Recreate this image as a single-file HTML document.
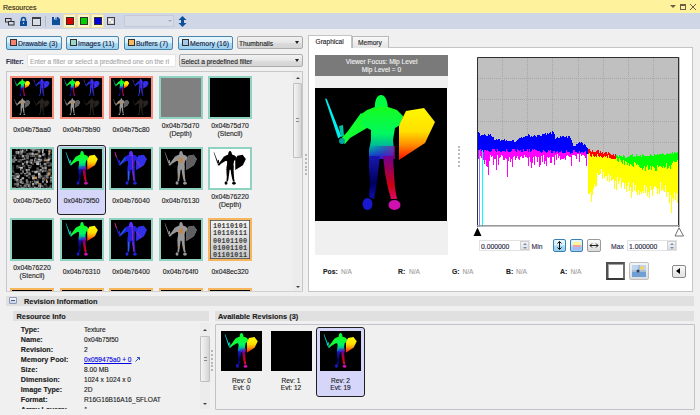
<!DOCTYPE html><html><head><meta charset="utf-8"><style>
*{margin:0;padding:0;box-sizing:border-box}
html,body{width:700px;height:415px;overflow:hidden;background:#f0f0f0;font-family:"Liberation Sans",sans-serif;font-size:7px;color:#1e1e1e}
.ab{position:absolute}
.t{position:absolute;white-space:pre;line-height:1;-webkit-text-stroke:0.12px currentColor}
.b{font-weight:bold}
.btn{position:absolute;border:1px solid #4a84ad;border-radius:2px;background:linear-gradient(#e8f6fd 0%,#d7effc 45%,#a9dbf6 55%,#9acfee 100%)}
.combo{position:absolute;border:1px solid #acacac;border-radius:2px;background:linear-gradient(#f2f2f2,#e6e6e6 50%,#dcdcdc 51%,#d4d4d4)}
.tri{position:absolute;width:0;height:0;border-left:2.5px solid transparent;border-right:2.5px solid transparent;border-top:3px solid #1e1e1e}
.frame{position:absolute;width:44px;height:43px;border:2px solid #8fd2c2;background:#000;overflow:hidden}
.fr-s{border-color:#f58c7c}
.fr-o{border-color:#f7b55c}
.lbl{-webkit-text-stroke:0.12px currentColor;position:absolute;width:50px;text-align:center;line-height:8px;color:#202020;font-size:6.8px}
</style></head><body>
<svg width="0" height="0" style="position:absolute">
<defs>
<linearGradient id="gBody" gradientUnits="userSpaceOnUse" x1="0" y1="7" x2="0" y2="71"><stop offset="0" stop-color="#20ff00"/><stop offset="0.6" stop-color="#00f860"/><stop offset="0.82" stop-color="#00b0a0"/><stop offset="1" stop-color="#2020d0"/></linearGradient>
<linearGradient id="gLegL" gradientUnits="userSpaceOnUse" x1="0" y1="68" x2="0" y2="122"><stop offset="0" stop-color="#1818b0"/><stop offset="0.5" stop-color="#000060"/><stop offset="1" stop-color="#1818e0"/></linearGradient>
<linearGradient id="gLegR" gradientUnits="userSpaceOnUse" x1="0" y1="68" x2="0" y2="122"><stop offset="0" stop-color="#700090"/><stop offset="0.55" stop-color="#d00010"/><stop offset="1" stop-color="#e010b0"/></linearGradient>
<linearGradient id="gShield" gradientUnits="userSpaceOnUse" x1="0" y1="20" x2="0" y2="72"><stop offset="0" stop-color="#fff800"/><stop offset="0.45" stop-color="#ffe000"/><stop offset="0.7" stop-color="#ff9000"/><stop offset="1" stop-color="#ff0800"/></linearGradient>
<linearGradient id="gHip" x1="0" y1="0" x2="1" y2="0"><stop offset="0" stop-color="#0000ff" stop-opacity="0"/><stop offset="1" stop-color="#a000a0" stop-opacity="0.7"/></linearGradient>
<linearGradient id="gBin" x1="0" y1="0" x2="0" y2="1"><stop offset="0" stop-color="#f4f4f4"/><stop offset="1" stop-color="#c4c4c4"/></linearGradient>
<g id="kSil"><path d="M60,24 C59,12 62,7 66,7 C70,7 73,12 73,24 Z"/><path d="M45,27 L52,22 L60,19 L73,19 L82,22 L88,28 L87,36 L80,40 L78,52 L79,62 L78,71 L54,71 L54,62 L56,52 L56,42 L48,38 Z"/><path d="M46,25 L55,33 L52,40 L35,50 L30,56 L25,52 L33,43 Z"/><path d="M10,10.5 L11.8,11 L26.3,48 L23.2,50.5 Z"/><path d="M24,38 L28,37 L29,48 L26,49 Z"/><path d="M54,68 L65,68 L63,85 L61,100 L59,111 L54,109 L55,95 L54,80 Z"/><path d="M68,68 L78,68 L79,85 L80,100 L82,111 L76,111 L73,100 L70,85 Z"/><ellipse cx="52.5" cy="116" rx="5" ry="6"/><ellipse cx="79.5" cy="117" rx="6" ry="5"/><circle cx="27" cy="53" r="3"/><path d="M88,29 L91,23 L109,20 L120,34 L110,55 L84,72 L84,38 Z"/></g>
<symbol id="kRain" viewBox="0 0 132 133">
 <path fill="#00f0f0" d="M10,10.5 L11.8,11 L26.3,48 L23.2,50.5 Z"/>
 <path fill="#00c0a0" d="M24,38 L28,37 L29,48 L26,49 Z"/>
 <path fill="#00ff40" d="M60,24 C59,12 62,7 66,7 C70,7 73,12 73,24 Z"/>
 <path fill="#10ff30" d="M46,25 L55,33 L52,40 L35,50 L30,56 L25,52 L33,43 Z"/>
 <circle fill="#00a0a0" cx="27" cy="53" r="3"/>
 <path fill="url(#gBody)" d="M45,27 L52,22 L60,19 L73,19 L82,22 L88,28 L87,36 L80,40 L78,52 L79,62 L78,71 L54,71 L54,62 L56,52 L56,42 L48,38 Z"/>
 <rect x="53" y="58" width="27" height="13" fill="url(#gHip)"/>
 <path fill="url(#gLegL)" d="M54,68 L65,68 L63,85 L61,100 L59,111 L54,109 L55,95 L54,80 Z"/>
 <path fill="url(#gLegR)" d="M68,68 L78,68 L79,85 L80,100 L82,111 L76,111 L73,100 L70,85 Z"/>
 <ellipse fill="#1818d0" cx="52.5" cy="116" rx="5" ry="6"/>
 <ellipse fill="#d010b0" cx="79.5" cy="117" rx="6" ry="5"/>
 <path fill="url(#gShield)" d="M88,29 L91,23 L109,20 L120,34 L110,55 L84,72 L84,38 Z"/>
</symbol>
<symbol id="kBlue" viewBox="0 0 132 133"><use href="#kSil" fill="#2424e0"/><path fill="#3030e8" d="M88,29 L91,23 L109,20 L120,34 L110,55 L84,72 L84,38 Z"/><path fill="#6030ff" d="M60,24 C59,12 62,7 66,7 C70,7 73,12 73,24 Z"/><path fill="#e02080" d="M10,11 L12.5,10 L18,28 L15,29 Z"/><path d="M70,22 L72,70 M73,75 L76,108 M84,40 L100,60" stroke="#d020a0" stroke-width="2.5" fill="none"/><path d="M46,30 L30,52 M57,75 L57,105" stroke="#20c0a0" stroke-width="2" fill="none"/></symbol>
<symbol id="kGray" viewBox="0 0 132 133"><use href="#kSil" fill="#989898"/><path fill="#606060" d="M88,29 L91,23 L109,20 L120,34 L110,55 L84,72 L84,38 Z"/><rect x="61" y="30" width="10" height="16" fill="#d08030"/><rect x="56" y="90" width="4" height="4" fill="#d08030"/><rect x="73" y="90" width="4" height="4" fill="#d08030"/></symbol>
<symbol id="kDark" viewBox="0 0 132 133"><use href="#kSil" fill="#2a2420"/></symbol>
<symbol id="kBlack" viewBox="0 0 132 133"><use href="#kSil" fill="#000"/></symbol>
<symbol id="kQuad" viewBox="0 0 132 133">
 <use href="#kRain" x="0" y="0" width="66" height="66"/>
 <use href="#kBlue" x="66" y="0" width="66" height="66"/>
 <use href="#kGray" x="0" y="66" width="66" height="66"/>
 <use href="#kDark" x="66" y="66" width="66" height="66"/>
</symbol>
</defs></svg>
<div class="ab" style="left:0;top:0;width:700px;height:13px;background:#fff29d"></div>
<div class="t" style="left:3px;top:3.6px;font-size:7px;color:#2a2010">Resources</div>
<div class="ab" style="left:670px;top:5px;width:0;height:0;border-left:3px solid transparent;border-right:3px solid transparent;border-top:3px solid #6e5e44"></div>
<div class="ab" style="left:680px;top:4px;width:6px;height:6px;border:1px solid #6e5e44;border-top-width:2px"></div>
<svg class="ab" style="left:689px;top:3px" width="8" height="8"><path d="M1,1 L7,7 M7,1 L1,7" stroke="#6e5e44" stroke-width="1"/></svg>
<div class="ab" style="left:0;top:13px;width:700px;height:16px;background:#cfd6e5"></div>
<svg class="ab" style="left:4px;top:17px" width="12" height="10"><rect x="1.5" y="1.5" width="5.5" height="3.5" fill="none" stroke="#303030" stroke-width="1"/><rect x="4.5" y="4.5" width="5.5" height="3.5" fill="#cfd6e5" stroke="#303030" stroke-width="1"/></svg>
<svg class="ab" style="left:19px;top:16px" width="9" height="11"><path d="M2.5,5 V3.5 A2,2 0 0 1 6.5,3.5 V5" fill="none" stroke="#0e4f9a" stroke-width="1.6"/><rect x="1" y="5" width="7" height="5" fill="#0e4f9a"/><rect x="4" y="6.5" width="1" height="1.5" fill="#cfd6e5"/></svg>
<div class="ab" style="left:32px;top:17px;width:9px;height:9px;border:1px solid #404040;border-top-width:2px;background:#d8dde8"></div>
<div class="ab" style="left:45px;top:16px;width:1px;height:11px;background:#b4bccb"></div>
<svg class="ab" style="left:52px;top:17px" width="8" height="8"><path d="M0,0 H6 L8,2 V8 H0 Z" fill="#0e4f9a"/><rect x="2" y="0" width="3" height="2.5" fill="#cfd6e5"/><rect x="3.5" y="0.5" width="1" height="1.5" fill="#0e4f9a"/></svg>
<div class="ab" style="left:63px;top:14px;width:13px;height:14px;background:#fdf4c6;border:1px solid #efe0a0"></div>
<div class="ab" style="left:66px;top:17px;width:8px;height:8px;background:#e00000;border:1px solid #303030"></div>
<div class="ab" style="left:77px;top:14px;width:13px;height:14px;background:#fdf4c6;border:1px solid #efe0a0"></div>
<div class="ab" style="left:80px;top:17px;width:8px;height:8px;background:#00d000;border:1px solid #303030"></div>
<div class="ab" style="left:91px;top:14px;width:13px;height:14px;background:#fdf4c6;border:1px solid #efe0a0"></div>
<div class="ab" style="left:94px;top:17px;width:8px;height:8px;background:#0000e0;border:1px solid #303030"></div>
<svg class="ab" style="left:107px;top:17px" width="8" height="8"><rect x="0.5" y="0.5" width="7" height="7" fill="#d0d0d0" stroke="#404040"/><path d="M2,2h2v2h-2zM4,4h2v2h-2z" fill="#fff"/></svg>
<div class="ab" style="left:124px;top:15px;width:50px;height:12px;border:1px solid #c4cad6;background:#d5dbe7"></div>
<div class="ab" style="left:168px;top:20px;width:0;height:0;border-left:2px solid transparent;border-right:2px solid transparent;border-top:2px solid #a0a8b8"></div>
<svg class="ab" style="left:178px;top:16px" width="9" height="11"><path d="M4.5,0 L8.5,4 H6 V7 H8.5 L4.5,11 L0.5,7 H3 V4 H0.5 Z" fill="#0e4f9a"/></svg>
<div class="btn" style="left:6px;top:36px;width:56px;height:14px"></div>
<div class="ab" style="left:10px;top:39px;width:7px;height:7px;background:#f7806e;border:1px solid #303030"></div>
<div class="t" style="left:18px;top:41px;color:#1a1a40;font-size:6.9px">Drawable (3)</div>
<div class="btn" style="left:66px;top:36px;width:53px;height:14px"></div>
<div class="ab" style="left:70px;top:39px;width:7px;height:7px;background:#9ad6c6;border:1px solid #303030"></div>
<div class="t" style="left:78px;top:41px;color:#1a1a40;font-size:6.9px">Images (11)</div>
<div class="btn" style="left:124px;top:36px;width:49px;height:14px"></div>
<div class="ab" style="left:128px;top:39px;width:7px;height:7px;background:#f8b860;border:1px solid #303030"></div>
<div class="t" style="left:136px;top:41px;color:#1a1a40;font-size:6.9px">Buffers (7)</div>
<div class="btn" style="left:178px;top:36px;width:55px;height:14px"></div>
<div class="ab" style="left:182px;top:39px;width:7px;height:7px;background:#a8c8e8;border:1px solid #303030"></div>
<div class="t" style="left:190px;top:41px;color:#1a1a40;font-size:6.9px">Memory (16)</div>
<div class="combo" style="left:237px;top:36px;width:66px;height:13px"></div>
<div class="t" style="left:239px;top:40.5px;font-size:6.6px">Thumbnails</div>
<div class="tri" style="left:294.5px;top:41px"></div>
<div class="t b" style="left:6px;top:59px;font-size:6.4px;color:#303050">Filter:</div>
<div class="ab" style="left:27px;top:54px;width:149px;height:13px;background:#fff;border:1px solid #e4e4e4"></div>
<div class="t" style="left:30px;top:59px;font-size:6.6px;color:#a8a8a8;width:145px;overflow:hidden">Enter a filter or select a predefined one on the ri</div>
<div class="combo" style="left:179px;top:54px;width:124px;height:13px"></div>
<div class="t" style="left:181px;top:58.5px;font-size:6.6px">Select a predefined filter</div>
<div class="tri" style="left:294.5px;top:59px"></div>
<div class="ab" style="left:6px;top:71px;width:297px;height:221px;border:1px solid #c8c8c8;border-bottom:none;background:#f0f0f0"></div>
<div class="ab" style="left:293px;top:72px;width:9px;height:219px;background:#ececec"></div>
<div class="ab" style="left:296px;top:77px;width:0;height:0;border-left:2.5px solid transparent;border-right:2.5px solid transparent;border-bottom:2.5px solid #404040"></div>
<div class="ab" style="left:293px;top:83px;width:9px;height:75px;border:1px solid #c0c0c0;border-radius:1px;background:linear-gradient(90deg,#f4f4f4,#e6e6e6 50%,#d4d4d4)"></div>
<div class="ab" style="left:296px;top:118px;width:3px;height:4px;border-top:1px solid #888;border-bottom:1px solid #888"></div>
<div class="ab" style="left:296px;top:286px;width:0;height:0;border-left:2.5px solid transparent;border-right:2.5px solid transparent;border-top:2.5px solid #404040"></div>
<div class="ab" style="left:0;top:0;width:293px;height:291px;overflow:hidden">
<div class="frame fr-s" style="left:10px;top:76px"><svg width="40" height="39" style="display:block;background:#000"><use href="#kQuad" width="40" height="39"/></svg></div>
<div class="lbl" style="left:7px;top:126px">0x04b75aa0</div>
<div class="frame fr-s" style="left:59.5px;top:76px"><svg width="40" height="39" style="display:block;background:#000"><use href="#kQuad" width="40" height="39"/></svg></div>
<div class="lbl" style="left:56.5px;top:126px">0x04b75b90</div>
<div class="frame fr-s" style="left:109px;top:76px"><svg width="40" height="39" style="display:block;background:#000"><use href="#kQuad" width="40" height="39"/></svg></div>
<div class="lbl" style="left:106px;top:126px">0x04b75c80</div>
<div class="frame" style="left:158.5px;top:76px"><div style="width:40px;height:39px;background:#808080"></div></div>
<div class="lbl" style="left:155.5px;top:122px">0x04b75d70<br>(Depth)</div>
<div class="frame" style="left:208px;top:76px"></div>
<div class="lbl" style="left:205px;top:122px">0x04b75d70<br>(Stencil)</div>
<div class="frame" style="left:10px;top:147px"><svg width="40" height="39" style="display:block;background:#000;filter:blur(0.45px)"><rect x="3.9" y="-0.4" width="2" height="1.5" fill="rgb(55,55,55)"/><rect x="7.6" y="0.1" width="2" height="2.5" fill="rgb(81,81,81)"/><rect x="9.9" y="0.5" width="1.5" height="2.5" fill="rgb(187,187,187)"/><rect x="11.6" y="-0.2" width="2" height="1.5" fill="rgb(88,88,88)"/><rect x="14.0" y="-0.4" width="1.5" height="2.5" fill="rgb(140,140,140)"/><rect x="18.1" y="-0.0" width="2.5" height="1.5" fill="rgb(109,109,109)"/><rect x="20.1" y="0.0" width="2.5" height="2.5" fill="rgb(149,149,149)"/><rect x="22.0" y="-0.3" width="2.5" height="1.5" fill="rgb(136,136,136)"/><rect x="23.6" y="0.1" width="2.5" height="2" fill="rgb(108,108,108)"/><rect x="26.0" y="0.3" width="2.5" height="2" fill="rgb(134,134,134)"/><rect x="27.8" y="0.1" width="3" height="2" fill="rgb(54,54,54)"/><rect x="30.4" y="-0.1" width="1.5" height="2" fill="rgb(178,178,178)"/><rect x="33.9" y="0.4" width="1.5" height="1.5" fill="rgb(64,64,64)"/><rect x="36.3" y="0.4" width="2.5" height="2.5" fill="rgb(127,127,127)"/><rect x="38.5" y="-0.3" width="2" height="1.5" fill="rgb(98,98,98)"/><rect x="3.5" y="1.9" width="2.5" height="2.5" fill="rgb(133,133,133)"/><rect x="6.0" y="2.1" width="1.5" height="2" fill="rgb(187,187,187)"/><rect x="8.3" y="1.9" width="3" height="2" fill="rgb(161,161,161)"/><rect x="11.7" y="1.7" width="2.5" height="2.5" fill="rgb(54,54,54)"/><rect x="25.8" y="1.8" width="2.5" height="2" fill="rgb(137,137,137)"/><rect x="30.0" y="1.6" width="1.5" height="2.5" fill="rgb(193,193,193)"/><rect x="36.5" y="2.0" width="2" height="2.5" fill="rgb(200,140,80)"/><rect x="38.5" y="2.4" width="2.5" height="2.5" fill="rgb(49,49,49)"/><rect x="3.8" y="3.7" width="2" height="1.5" fill="rgb(124,124,124)"/><rect x="6.0" y="3.9" width="1.5" height="1.5" fill="rgb(155,155,155)"/><rect x="8.1" y="3.8" width="2.5" height="2" fill="rgb(115,115,115)"/><rect x="14.5" y="4.1" width="1.5" height="2" fill="rgb(95,95,95)"/><rect x="16.3" y="3.6" width="3" height="2.5" fill="rgb(96,96,96)"/><rect x="18.3" y="3.8" width="3" height="2" fill="rgb(116,116,116)"/><rect x="19.7" y="3.6" width="2" height="2.5" fill="rgb(187,187,187)"/><rect x="22.3" y="4.5" width="2.5" height="1.5" fill="rgb(165,165,165)"/><rect x="24.5" y="4.1" width="2" height="2" fill="rgb(200,140,80)"/><rect x="25.5" y="3.7" width="2" height="2.5" fill="rgb(74,74,74)"/><rect x="30.2" y="4.4" width="3" height="2.5" fill="rgb(170,170,170)"/><rect x="36.1" y="4.3" width="2" height="1.5" fill="rgb(175,175,175)"/><rect x="0.2" y="6.0" width="3" height="1.5" fill="rgb(63,63,63)"/><rect x="1.5" y="5.6" width="3" height="2.5" fill="rgb(53,53,53)"/><rect x="6.5" y="6.1" width="2" height="2.5" fill="rgb(54,54,54)"/><rect x="9.7" y="6.0" width="2.5" height="2.5" fill="rgb(166,166,166)"/><rect x="11.9" y="5.9" width="2.5" height="1.5" fill="rgb(75,75,75)"/><rect x="13.8" y="5.6" width="2" height="2.5" fill="rgb(109,109,109)"/><rect x="15.6" y="6.0" width="1.5" height="2" fill="rgb(99,99,99)"/><rect x="17.7" y="6.2" width="3" height="2" fill="rgb(69,69,69)"/><rect x="19.9" y="5.8" width="3" height="2" fill="rgb(98,98,98)"/><rect x="21.8" y="6.5" width="1.5" height="1.5" fill="rgb(102,102,102)"/><rect x="23.5" y="6.3" width="2.5" height="1.5" fill="rgb(60,60,60)"/><rect x="26.4" y="5.9" width="3" height="2.5" fill="rgb(172,172,172)"/><rect x="31.8" y="5.5" width="1.5" height="2" fill="rgb(72,72,72)"/><rect x="36.0" y="5.8" width="3" height="2" fill="rgb(54,54,54)"/><rect x="38.4" y="6.5" width="2.5" height="1.5" fill="rgb(51,51,51)"/><rect x="1.7" y="7.9" width="2" height="2" fill="rgb(139,139,139)"/><rect x="12.0" y="8.4" width="1.5" height="2.5" fill="rgb(127,127,127)"/><rect x="14.3" y="7.9" width="2.5" height="2.5" fill="rgb(109,109,109)"/><rect x="22.5" y="8.5" width="2" height="1.5" fill="rgb(154,154,154)"/><rect x="25.6" y="8.3" width="2.5" height="2.5" fill="rgb(83,83,83)"/><rect x="31.8" y="8.5" width="2.5" height="1.5" fill="rgb(68,68,68)"/><rect x="35.8" y="7.6" width="2.5" height="2.5" fill="rgb(77,77,77)"/><rect x="37.6" y="8.3" width="2" height="2" fill="rgb(82,82,82)"/><rect x="0.1" y="9.6" width="2" height="2.5" fill="rgb(104,104,104)"/><rect x="2.3" y="10.2" width="3" height="1.5" fill="rgb(162,162,162)"/><rect x="6.2" y="10.0" width="3" height="2.5" fill="rgb(66,66,66)"/><rect x="8.3" y="10.1" width="1.5" height="2.5" fill="rgb(120,120,120)"/><rect x="10.2" y="9.7" width="1.5" height="1.5" fill="rgb(178,178,178)"/><rect x="18.1" y="10.2" width="3" height="2" fill="rgb(128,128,128)"/><rect x="22.0" y="10.2" width="1.5" height="2.5" fill="rgb(157,157,157)"/><rect x="23.8" y="10.2" width="2" height="1.5" fill="rgb(82,82,82)"/><rect x="25.9" y="10.0" width="2.5" height="1.5" fill="rgb(191,191,191)"/><rect x="27.6" y="9.8" width="2.5" height="2.5" fill="rgb(141,141,141)"/><rect x="29.8" y="10.2" width="2" height="2.5" fill="rgb(46,46,46)"/><rect x="32.0" y="10.3" width="2" height="2" fill="rgb(151,151,151)"/><rect x="34.0" y="10.3" width="3" height="2" fill="rgb(200,140,80)"/><rect x="35.6" y="9.6" width="2.5" height="2" fill="rgb(182,182,182)"/><rect x="0.2" y="11.7" width="3" height="2" fill="rgb(121,121,121)"/><rect x="5.6" y="11.8" width="2.5" height="1.5" fill="rgb(112,112,112)"/><rect x="8.3" y="11.6" width="2" height="2.5" fill="rgb(45,45,45)"/><rect x="11.9" y="12.4" width="1.5" height="2" fill="rgb(82,82,82)"/><rect x="13.8" y="11.6" width="2.5" height="2.5" fill="rgb(158,158,158)"/><rect x="16.0" y="11.7" width="2.5" height="2" fill="rgb(82,82,82)"/><rect x="18.4" y="12.4" width="2" height="2.5" fill="rgb(166,166,166)"/><rect x="21.6" y="12.4" width="3" height="1.5" fill="rgb(106,106,106)"/><rect x="23.9" y="11.8" width="2.5" height="2.5" fill="rgb(127,127,127)"/><rect x="25.7" y="12.0" width="3" height="1.5" fill="rgb(142,142,142)"/><rect x="34.4" y="12.5" width="3" height="2" fill="rgb(119,119,119)"/><rect x="9.9" y="13.9" width="2" height="2" fill="rgb(178,178,178)"/><rect x="13.9" y="14.2" width="2" height="1.5" fill="rgb(119,119,119)"/><rect x="20.3" y="14.4" width="1.5" height="1.5" fill="rgb(111,111,111)"/><rect x="24.1" y="13.5" width="3" height="2.5" fill="rgb(179,179,179)"/><rect x="25.6" y="13.7" width="1.5" height="2.5" fill="rgb(190,190,190)"/><rect x="27.6" y="14.3" width="1.5" height="1.5" fill="rgb(171,171,171)"/><rect x="31.6" y="13.8" width="3" height="2.5" fill="rgb(141,141,141)"/><rect x="34.4" y="13.7" width="2.5" height="1.5" fill="rgb(59,59,59)"/><rect x="36.5" y="13.8" width="2.5" height="2.5" fill="rgb(45,45,45)"/><rect x="38.0" y="13.5" width="3" height="2.5" fill="rgb(81,81,81)"/><rect x="0.4" y="16.1" width="1.5" height="2" fill="rgb(53,53,53)"/><rect x="4.2" y="16.2" width="2.5" height="2.5" fill="rgb(100,100,100)"/><rect x="6.3" y="15.6" width="3" height="1.5" fill="rgb(46,46,46)"/><rect x="10.3" y="15.8" width="3" height="2.5" fill="rgb(79,79,79)"/><rect x="15.6" y="15.9" width="2" height="1.5" fill="rgb(144,144,144)"/><rect x="17.6" y="15.9" width="2.5" height="2.5" fill="rgb(66,66,66)"/><rect x="27.8" y="16.2" width="2.5" height="2" fill="rgb(123,123,123)"/><rect x="29.6" y="15.9" width="1.5" height="2.5" fill="rgb(61,61,61)"/><rect x="32.3" y="16.3" width="3" height="1.5" fill="rgb(76,76,76)"/><rect x="35.7" y="15.9" width="3" height="1.5" fill="rgb(100,100,100)"/><rect x="37.9" y="15.9" width="3" height="1.5" fill="rgb(82,82,82)"/><rect x="-0.4" y="18.1" width="2.5" height="2" fill="rgb(54,54,54)"/><rect x="4.2" y="18.4" width="2.5" height="1.5" fill="rgb(51,51,51)"/><rect x="6.4" y="17.6" width="2" height="1.5" fill="rgb(134,134,134)"/><rect x="7.9" y="17.8" width="3" height="2" fill="rgb(188,188,188)"/><rect x="11.8" y="18.2" width="2" height="2.5" fill="rgb(46,46,46)"/><rect x="16.1" y="18.0" width="3" height="1.5" fill="rgb(114,114,114)"/><rect x="24.4" y="18.5" width="2.5" height="2.5" fill="rgb(93,93,93)"/><rect x="29.7" y="17.9" width="2" height="2.5" fill="rgb(151,151,151)"/><rect x="32.3" y="17.8" width="2.5" height="2.5" fill="rgb(161,161,161)"/><rect x="-0.2" y="20.4" width="2" height="2" fill="rgb(72,72,72)"/><rect x="8.0" y="19.5" width="1.5" height="2" fill="rgb(142,142,142)"/><rect x="9.9" y="20.4" width="2" height="1.5" fill="rgb(79,79,79)"/><rect x="13.6" y="20.0" width="2" height="2" fill="rgb(169,169,169)"/><rect x="15.5" y="20.1" width="2.5" height="1.5" fill="rgb(161,161,161)"/><rect x="24.4" y="20.3" width="2.5" height="2" fill="rgb(50,50,50)"/><rect x="25.7" y="20.3" width="3" height="1.5" fill="rgb(72,72,72)"/><rect x="27.7" y="20.0" width="2" height="2" fill="rgb(164,164,164)"/><rect x="29.8" y="20.5" width="2.5" height="2.5" fill="rgb(106,106,106)"/><rect x="32.4" y="20.5" width="2.5" height="2.5" fill="rgb(98,98,98)"/><rect x="36.4" y="19.9" width="1.5" height="2" fill="rgb(200,140,80)"/><rect x="37.6" y="19.6" width="2" height="2.5" fill="rgb(99,99,99)"/><rect x="0.4" y="22.2" width="2" height="1.5" fill="rgb(104,104,104)"/><rect x="10.3" y="21.8" width="1.5" height="2" fill="rgb(158,158,158)"/><rect x="14.2" y="22.2" width="2" height="2.5" fill="rgb(140,140,140)"/><rect x="16.3" y="22.3" width="2" height="2.5" fill="rgb(78,78,78)"/><rect x="19.6" y="21.7" width="2" height="1.5" fill="rgb(122,122,122)"/><rect x="22.2" y="21.8" width="3" height="2.5" fill="rgb(171,171,171)"/><rect x="24.1" y="21.8" width="2" height="2" fill="rgb(172,172,172)"/><rect x="25.7" y="21.5" width="3" height="2" fill="rgb(100,100,100)"/><rect x="29.7" y="22.0" width="1.5" height="1.5" fill="rgb(161,161,161)"/><rect x="34.0" y="21.5" width="2" height="1.5" fill="rgb(58,58,58)"/><rect x="35.6" y="22.3" width="3" height="2.5" fill="rgb(92,92,92)"/><rect x="38.5" y="22.2" width="1.5" height="1.5" fill="rgb(65,65,65)"/><rect x="2.3" y="24.2" width="2" height="1.5" fill="rgb(88,88,88)"/><rect x="3.8" y="24.1" width="3" height="1.5" fill="rgb(136,136,136)"/><rect x="8.1" y="23.7" width="2.5" height="1.5" fill="rgb(117,117,117)"/><rect x="11.8" y="23.9" width="2.5" height="1.5" fill="rgb(140,140,140)"/><rect x="14.5" y="24.0" width="1.5" height="2" fill="rgb(52,52,52)"/><rect x="16.3" y="23.8" width="2.5" height="2.5" fill="rgb(139,139,139)"/><rect x="26.0" y="23.8" width="2.5" height="2.5" fill="rgb(188,188,188)"/><rect x="34.4" y="23.6" width="2" height="2.5" fill="rgb(109,109,109)"/><rect x="35.9" y="23.6" width="2.5" height="2.5" fill="rgb(200,140,80)"/><rect x="0.1" y="26.0" width="2" height="1.5" fill="rgb(133,133,133)"/><rect x="1.6" y="26.1" width="2.5" height="2" fill="rgb(81,81,81)"/><rect x="4.3" y="26.4" width="3" height="2.5" fill="rgb(190,190,190)"/><rect x="6.4" y="25.5" width="1.5" height="2" fill="rgb(155,155,155)"/><rect x="12.2" y="25.7" width="3" height="1.5" fill="rgb(60,60,60)"/><rect x="13.9" y="26.1" width="2.5" height="1.5" fill="rgb(141,141,141)"/><rect x="19.5" y="26.3" width="3" height="1.5" fill="rgb(162,162,162)"/><rect x="21.6" y="25.7" width="1.5" height="1.5" fill="rgb(112,112,112)"/><rect x="26.2" y="25.8" width="3" height="2.5" fill="rgb(149,149,149)"/><rect x="28.1" y="26.5" width="2" height="1.5" fill="rgb(123,123,123)"/><rect x="29.7" y="26.2" width="2" height="2.5" fill="rgb(47,47,47)"/><rect x="32.1" y="25.9" width="3" height="2" fill="rgb(73,73,73)"/><rect x="33.9" y="26.2" width="2.5" height="1.5" fill="rgb(149,149,149)"/><rect x="35.7" y="25.5" width="1.5" height="1.5" fill="rgb(132,132,132)"/><rect x="38.2" y="25.5" width="2" height="2.5" fill="rgb(69,69,69)"/><rect x="-0.5" y="28.4" width="2.5" height="1.5" fill="rgb(51,51,51)"/><rect x="1.6" y="28.4" width="3" height="1.5" fill="rgb(167,167,167)"/><rect x="9.6" y="28.3" width="2.5" height="2" fill="rgb(181,181,181)"/><rect x="15.9" y="27.5" width="2.5" height="2" fill="rgb(75,75,75)"/><rect x="20.1" y="28.0" width="2.5" height="2.5" fill="rgb(181,181,181)"/><rect x="22.0" y="27.6" width="3" height="2.5" fill="rgb(200,140,80)"/><rect x="26.1" y="27.8" width="3" height="1.5" fill="rgb(152,152,152)"/><rect x="27.6" y="27.8" width="1.5" height="2" fill="rgb(88,88,88)"/><rect x="30.1" y="28.5" width="2.5" height="2.5" fill="rgb(168,168,168)"/><rect x="32.2" y="28.0" width="1.5" height="2.5" fill="rgb(87,87,87)"/><rect x="34.1" y="27.6" width="2.5" height="2" fill="rgb(118,118,118)"/><rect x="37.9" y="28.1" width="2.5" height="1.5" fill="rgb(178,178,178)"/><rect x="2.5" y="30.1" width="3" height="1.5" fill="rgb(126,126,126)"/><rect x="4.1" y="29.8" width="2.5" height="2.5" fill="rgb(158,158,158)"/><rect x="7.7" y="29.9" width="2.5" height="2.5" fill="rgb(144,144,144)"/><rect x="13.8" y="30.3" width="2" height="2.5" fill="rgb(149,149,149)"/><rect x="21.7" y="30.5" width="1.5" height="1.5" fill="rgb(69,69,69)"/><rect x="24.5" y="30.3" width="2.5" height="2" fill="rgb(60,60,60)"/><rect x="30.0" y="29.5" width="3" height="2.5" fill="rgb(87,87,87)"/><rect x="33.8" y="30.2" width="1.5" height="2.5" fill="rgb(200,140,80)"/><rect x="38.1" y="30.3" width="2" height="2.5" fill="rgb(150,150,150)"/><rect x="4.4" y="31.7" width="3" height="2.5" fill="rgb(83,83,83)"/><rect x="6.0" y="31.5" width="3" height="2.5" fill="rgb(68,68,68)"/><rect x="8.2" y="32.3" width="3" height="2" fill="rgb(184,184,184)"/><rect x="9.7" y="32.2" width="2" height="2.5" fill="rgb(60,60,60)"/><rect x="14.0" y="31.5" width="2.5" height="2.5" fill="rgb(113,113,113)"/><rect x="17.7" y="32.0" width="1.5" height="2.5" fill="rgb(113,113,113)"/><rect x="19.8" y="31.9" width="1.5" height="1.5" fill="rgb(98,98,98)"/><rect x="21.9" y="31.8" width="2" height="2" fill="rgb(108,108,108)"/><rect x="23.7" y="32.3" width="3" height="2" fill="rgb(185,185,185)"/><rect x="30.0" y="32.1" width="2" height="1.5" fill="rgb(166,166,166)"/><rect x="34.0" y="31.8" width="2" height="2" fill="rgb(167,167,167)"/><rect x="37.8" y="31.9" width="2" height="2" fill="rgb(85,85,85)"/><rect x="1.8" y="34.0" width="3" height="2.5" fill="rgb(87,87,87)"/><rect x="4.4" y="34.4" width="1.5" height="1.5" fill="rgb(143,143,143)"/><rect x="5.6" y="34.3" width="1.5" height="2.5" fill="rgb(180,180,180)"/><rect x="9.6" y="33.6" width="2" height="1.5" fill="rgb(143,143,143)"/><rect x="12.4" y="34.3" width="2" height="2.5" fill="rgb(96,96,96)"/><rect x="14.2" y="34.4" width="2.5" height="1.5" fill="rgb(136,136,136)"/><rect x="16.3" y="34.2" width="1.5" height="2.5" fill="rgb(76,76,76)"/><rect x="20.1" y="34.0" width="2" height="2.5" fill="rgb(169,169,169)"/><rect x="22.4" y="33.5" width="2.5" height="2" fill="rgb(119,119,119)"/><rect x="24.0" y="33.9" width="1.5" height="1.5" fill="rgb(119,119,119)"/><rect x="26.1" y="34.2" width="2.5" height="1.5" fill="rgb(200,140,80)"/><rect x="27.5" y="34.2" width="2" height="2" fill="rgb(117,117,117)"/><rect x="32.1" y="34.4" width="2.5" height="2" fill="rgb(96,96,96)"/><rect x="4.4" y="35.8" width="2" height="2.5" fill="rgb(95,95,95)"/><rect x="6.2" y="35.6" width="1.5" height="1.5" fill="rgb(62,62,62)"/><rect x="8.1" y="35.9" width="1.5" height="1.5" fill="rgb(128,128,128)"/><rect x="11.6" y="36.0" width="3" height="2.5" fill="rgb(116,116,116)"/><rect x="15.6" y="35.5" width="3" height="2.5" fill="rgb(148,148,148)"/><rect x="17.5" y="36.3" width="1.5" height="2" fill="rgb(60,60,60)"/><rect x="20.2" y="36.4" width="2" height="2" fill="rgb(65,65,65)"/><rect x="26.0" y="36.0" width="1.5" height="2" fill="rgb(131,131,131)"/><rect x="27.5" y="35.9" width="2" height="2" fill="rgb(182,182,182)"/><rect x="30.0" y="36.4" width="1.5" height="2" fill="rgb(127,127,127)"/><rect x="33.6" y="36.4" width="2" height="2" fill="rgb(63,63,63)"/><rect x="37.7" y="35.6" width="2" height="2.5" fill="rgb(81,81,81)"/><rect x="-0.0" y="38.2" width="2.5" height="1.5" fill="rgb(88,88,88)"/><rect x="2.2" y="38.3" width="1.5" height="2" fill="rgb(200,140,80)"/><rect x="6.0" y="37.6" width="2.5" height="2.5" fill="rgb(69,69,69)"/><rect x="8.5" y="37.6" width="2" height="2.5" fill="rgb(115,115,115)"/><rect x="10.0" y="37.8" width="2.5" height="2" fill="rgb(116,116,116)"/><rect x="14.1" y="38.4" width="1.5" height="1.5" fill="rgb(142,142,142)"/><rect x="16.4" y="37.9" width="3" height="2.5" fill="rgb(91,91,91)"/><rect x="18.2" y="37.8" width="2.5" height="2" fill="rgb(80,80,80)"/><rect x="21.8" y="37.6" width="2" height="2" fill="rgb(159,159,159)"/><rect x="24.3" y="38.0" width="1.5" height="2.5" fill="rgb(164,164,164)"/><rect x="26.3" y="38.4" width="2" height="2" fill="rgb(164,164,164)"/><rect x="27.7" y="37.8" width="1.5" height="2" fill="rgb(146,146,146)"/><rect x="30.3" y="37.7" width="2.5" height="2.5" fill="rgb(58,58,58)"/><rect x="33.6" y="38.3" width="2.5" height="2" fill="rgb(75,75,75)"/><rect x="36.4" y="37.7" width="3" height="2" fill="rgb(98,98,98)"/><rect x="37.6" y="37.8" width="1.5" height="2" fill="rgb(100,100,100)"/></svg></div>
<div class="lbl" style="left:7px;top:197px">0x04b75e60</div>
<div class="ab" style="left:57.0px;top:144.5px;width:49px;height:70px;border:1px solid #202020;border-radius:3px;background:#d6d6fb"></div>
<div class="frame" style="left:59.5px;top:147px"><svg width="40" height="39" style="display:block;background:#000"><use href="#kRain" width="40" height="39"/></svg></div>
<div class="lbl" style="left:56.5px;top:197px">0x04b75f50</div>
<div class="frame" style="left:109px;top:147px"><svg width="40" height="39" style="display:block;background:#000"><use href="#kBlue" width="40" height="39"/></svg></div>
<div class="lbl" style="left:106px;top:197px">0x04b76040</div>
<div class="frame" style="left:158.5px;top:147px"><svg width="40" height="39" style="display:block;background:#000"><use href="#kGray" width="40" height="39"/></svg></div>
<div class="lbl" style="left:155.5px;top:197px">0x04b76130</div>
<div class="frame" style="left:208px;top:147px"><svg width="40" height="39" style="display:block;background:#fff"><use href="#kBlack" width="40" height="39"/></svg></div>
<div class="lbl" style="left:205px;top:193px">0x04b76220<br>(Depth)</div>
<div class="frame" style="left:10px;top:218px"></div>
<div class="lbl" style="left:7px;top:264px">0x04b76220<br>(Stencil)</div>
<div class="frame" style="left:59.5px;top:218px"><svg width="40" height="39" style="display:block;background:#000"><use href="#kRain" width="40" height="39"/></svg></div>
<div class="lbl" style="left:56.5px;top:268px">0x04b76310</div>
<div class="frame" style="left:109px;top:218px"><svg width="40" height="39" style="display:block;background:#000"><use href="#kBlue" width="40" height="39"/></svg></div>
<div class="lbl" style="left:106px;top:268px">0x04b76400</div>
<div class="frame" style="left:158.5px;top:218px"><svg width="40" height="39" style="display:block;background:#000"><use href="#kGray" width="40" height="39"/></svg></div>
<div class="lbl" style="left:155.5px;top:268px">0x04b764f0</div>
<div class="frame fr-o" style="left:208px;top:218px"><svg width="40" height="39" style="display:block;background:url(#gBin)"><rect x="0" y="0" width="40" height="39" fill="url(#gBin)" stroke="#404040" stroke-width="1.5"/><text x="3" y="8.0" font-family="Liberation Mono" font-weight="bold" font-size="6.8" fill="#3a3a3a" textLength="34">10110101</text><text x="3" y="15.3" font-family="Liberation Mono" font-weight="bold" font-size="6.8" fill="#3a3a3a" textLength="34">10110111</text><text x="3" y="22.6" font-family="Liberation Mono" font-weight="bold" font-size="6.8" fill="#3a3a3a" textLength="34">00101100</text><text x="3" y="29.9" font-family="Liberation Mono" font-weight="bold" font-size="6.8" fill="#3a3a3a" textLength="34">01001101</text><text x="3" y="37.2" font-family="Liberation Mono" font-weight="bold" font-size="6.8" fill="#3a3a3a" textLength="34">01101011</text></svg></div>
<div class="lbl" style="left:205px;top:268px">0x048ec320</div>
<div class="frame fr-o" style="left:10px;top:288px"></div>
<div class="frame fr-o" style="left:59.5px;top:288px"></div>
<div class="frame fr-o" style="left:109px;top:288px"></div>
<div class="frame fr-o" style="left:158.5px;top:288px"></div>
<div class="frame fr-o" style="left:208px;top:288px"></div>
</div>
<div class="ab" style="left:0;top:291px;width:305px;height:5px;background:#f0f0f0"></div>
<div class="ab" style="left:6px;top:291px;width:297px;height:1px;background:#d0d0d0"></div>
<div class="ab" style="left:308px;top:47px;width:385px;height:245px;background:#fff;border:1px solid #c4c4c4"></div>
<div class="ab" style="left:352px;top:36px;width:37px;height:12px;border:1px solid #b8b8b8;border-bottom:none;background:linear-gradient(#f8f8f8,#e4e4e4)"></div>
<div class="t" style="left:358px;top:39.5px;font-size:6.6px">Memory</div>
<div class="ab" style="left:308px;top:35px;width:44px;height:13px;border:1px solid #c4c4c4;border-bottom:none;background:#fff"></div>
<div class="t" style="left:315.5px;top:38.5px;font-size:6.6px">Graphical</div>
<div class="ab" style="left:315px;top:55px;width:133px;height:21px;background:#7a7a7a"></div>
<div class="t" style="left:315px;top:58px;width:133px;text-align:center;color:#f0f0f0;font-size:6.6px;line-height:7.8px">Viewer Focus: Mip Level<br>Mip Level = 0</div>
<div class="ab" style="left:315px;top:76px;width:133px;height:12px;background:#f0f0f0"></div>
<svg class="ab" style="left:315px;top:88px;background:#000" width="132" height="133"><use href="#kRain" width="132" height="133"/></svg>
<div class="ab" style="left:315px;top:221px;width:133px;height:34px;background:#f0f0f0"></div>
<div class="t b" style="left:323px;top:269px;font-size:6.8px;color:#202020">Pos:</div>
<div class="t" style="left:341px;top:269px;font-size:6.6px;color:#a0a0a0">N/A</div>
<div class="t b" style="left:398px;top:269px;font-size:6.8px;color:#202020">R:</div>
<div class="t" style="left:409px;top:269px;font-size:6.6px;color:#a0a0a0">N/A</div>
<div class="t b" style="left:452px;top:269px;font-size:6.8px;color:#202020">G:</div>
<div class="t" style="left:462.5px;top:269px;font-size:6.6px;color:#a0a0a0">N/A</div>
<div class="t b" style="left:506px;top:269px;font-size:6.8px;color:#202020">B:</div>
<div class="t" style="left:516px;top:269px;font-size:6.6px;color:#a0a0a0">N/A</div>
<div class="t b" style="left:560px;top:269px;font-size:6.8px;color:#202020">A:</div>
<div class="t" style="left:570.5px;top:269px;font-size:6.6px;color:#a0a0a0">N/A</div>
<div class="ab" style="left:606px;top:262px;width:19px;height:18px;border:2px solid #505050;border-right-color:#707070;border-bottom-color:#383838;background:#fff;box-shadow:inset 1px 1px 0 #a0a0a0"></div>
<div class="ab" style="left:629px;top:262px;width:20px;height:18px;border:1px solid #c0c0c0;border-radius:2px;background:linear-gradient(#f4f4f4,#dcdcdc)"></div>
<svg class="ab" style="left:632px;top:265px" width="14" height="12"><rect x="0" y="0" width="14" height="12" fill="#bcd6f0"/><rect x="0" y="7" width="14" height="5" fill="#6ea0d8"/><circle cx="10" cy="3" r="2" fill="#f8d060"/><path d="M7,0V12M0,6H14" stroke="#8a9ab0" stroke-width="0.8"/><circle cx="6" cy="6" r="1.5" fill="#304060"/></svg>
<div class="ab" style="left:672px;top:265px;width:14px;height:13px;border:1px solid #8a8a8a;border-radius:2px;background:linear-gradient(#fafafa,#e0e0e0)"></div>
<div class="ab" style="left:676px;top:268px;width:0;height:0;border-top:3.5px solid transparent;border-bottom:3.5px solid transparent;border-right:4px solid #000"></div>
<svg class="ab" style="left:477px;top:57px" width="203" height="170"><rect x="0" y="0" width="203" height="170" fill="#ffffff"/><rect x="0" y="0" width="203" height="170" fill="#c0c0c0"/><line x1="25.5" y1="1" x2="25.5" y2="170" stroke="#a6a6a6" stroke-width="1" stroke-dasharray="1,1"/><line x1="1" y1="21.5" x2="203" y2="21.5" stroke="#a6a6a6" stroke-width="1" stroke-dasharray="1,1"/><line x1="50.5" y1="1" x2="50.5" y2="170" stroke="#a6a6a6" stroke-width="1" stroke-dasharray="1,1"/><line x1="1" y1="42.5" x2="203" y2="42.5" stroke="#a6a6a6" stroke-width="1" stroke-dasharray="1,1"/><line x1="75.5" y1="1" x2="75.5" y2="170" stroke="#a6a6a6" stroke-width="1" stroke-dasharray="1,1"/><line x1="1" y1="64.5" x2="203" y2="64.5" stroke="#a6a6a6" stroke-width="1" stroke-dasharray="1,1"/><line x1="101.5" y1="1" x2="101.5" y2="170" stroke="#a6a6a6" stroke-width="1" stroke-dasharray="1,1"/><line x1="1" y1="85.5" x2="203" y2="85.5" stroke="#a6a6a6" stroke-width="1" stroke-dasharray="1,1"/><line x1="126.5" y1="1" x2="126.5" y2="170" stroke="#a6a6a6" stroke-width="1" stroke-dasharray="1,1"/><line x1="1" y1="106.5" x2="203" y2="106.5" stroke="#a6a6a6" stroke-width="1" stroke-dasharray="1,1"/><line x1="151.5" y1="1" x2="151.5" y2="170" stroke="#a6a6a6" stroke-width="1" stroke-dasharray="1,1"/><line x1="1" y1="127.5" x2="203" y2="127.5" stroke="#a6a6a6" stroke-width="1" stroke-dasharray="1,1"/><line x1="176.5" y1="1" x2="176.5" y2="170" stroke="#a6a6a6" stroke-width="1" stroke-dasharray="1,1"/><line x1="1" y1="148.5" x2="203" y2="148.5" stroke="#a6a6a6" stroke-width="1" stroke-dasharray="1,1"/><rect x="1" y="75" width="1" height="95" fill="#ffffff"/><rect x="1" y="75" width="1" height="18" fill="#0000ff"/><rect x="1" y="93" width="1" height="9" fill="#ff00ff"/><rect x="2" y="76" width="1" height="94" fill="#ffffff"/><rect x="2" y="76" width="1" height="17" fill="#0000ff"/><rect x="2" y="93" width="1" height="20" fill="#ff00ff"/><rect x="3" y="79" width="1" height="91" fill="#ffffff"/><rect x="3" y="79" width="1" height="13" fill="#0000ff"/><rect x="3" y="92" width="1" height="7" fill="#ff00ff"/><rect x="4" y="78" width="1" height="92" fill="#ffffff"/><rect x="4" y="78" width="1" height="16" fill="#0000ff"/><rect x="4" y="94" width="1" height="7" fill="#ff00ff"/><rect x="5" y="78" width="1" height="92" fill="#ffffff"/><rect x="5" y="78" width="1" height="15" fill="#0000ff"/><rect x="5" y="93" width="1" height="19" fill="#ff00ff"/><rect x="6" y="78" width="1" height="92" fill="#ffffff"/><rect x="6" y="78" width="1" height="17" fill="#0000ff"/><rect x="6" y="95" width="1" height="8" fill="#ff00ff"/><rect x="7" y="77" width="1" height="93" fill="#ffffff"/><rect x="7" y="77" width="1" height="16" fill="#0000ff"/><rect x="7" y="93" width="1" height="14" fill="#ff00ff"/><rect x="8" y="78" width="1" height="92" fill="#ffffff"/><rect x="8" y="78" width="1" height="15" fill="#0000ff"/><rect x="8" y="93" width="1" height="10" fill="#ff00ff"/><rect x="9" y="79" width="1" height="91" fill="#ffffff"/><rect x="9" y="79" width="1" height="15" fill="#0000ff"/><rect x="9" y="94" width="1" height="15" fill="#ff00ff"/><rect x="10" y="79" width="1" height="91" fill="#ffffff"/><rect x="10" y="79" width="1" height="14" fill="#0000ff"/><rect x="10" y="93" width="1" height="17" fill="#ff00ff"/><rect x="11" y="77" width="1" height="93" fill="#ffffff"/><rect x="11" y="77" width="1" height="17" fill="#0000ff"/><rect x="11" y="94" width="1" height="24" fill="#ff00ff"/><rect x="12" y="78" width="1" height="92" fill="#ffffff"/><rect x="12" y="78" width="1" height="17" fill="#0000ff"/><rect x="12" y="95" width="1" height="9" fill="#ff00ff"/><rect x="13" y="77" width="1" height="93" fill="#ffffff"/><rect x="13" y="77" width="1" height="18" fill="#0000ff"/><rect x="13" y="95" width="1" height="3" fill="#ff00ff"/><rect x="14" y="79" width="1" height="91" fill="#ffffff"/><rect x="14" y="79" width="1" height="15" fill="#0000ff"/><rect x="14" y="94" width="1" height="6" fill="#ff00ff"/><rect x="15" y="80" width="1" height="90" fill="#ffffff"/><rect x="15" y="80" width="1" height="12" fill="#0000ff"/><rect x="15" y="92" width="1" height="7" fill="#ff00ff"/><rect x="16" y="80" width="1" height="90" fill="#ffffff"/><rect x="16" y="80" width="1" height="12" fill="#0000ff"/><rect x="16" y="92" width="1" height="16" fill="#ff00ff"/><rect x="17" y="83" width="1" height="87" fill="#ffffff"/><rect x="17" y="83" width="1" height="9" fill="#0000ff"/><rect x="17" y="92" width="1" height="10" fill="#ff00ff"/><rect x="18" y="83" width="1" height="87" fill="#ffffff"/><rect x="18" y="83" width="1" height="11" fill="#0000ff"/><rect x="18" y="94" width="1" height="8" fill="#ff00ff"/><rect x="19" y="82" width="1" height="88" fill="#ffffff"/><rect x="19" y="82" width="1" height="13" fill="#0000ff"/><rect x="19" y="95" width="1" height="18" fill="#ff00ff"/><rect x="20" y="83" width="1" height="87" fill="#ffffff"/><rect x="20" y="83" width="1" height="9" fill="#0000ff"/><rect x="20" y="92" width="1" height="6" fill="#ff00ff"/><rect x="21" y="82" width="1" height="88" fill="#ffffff"/><rect x="21" y="82" width="1" height="12" fill="#0000ff"/><rect x="21" y="94" width="1" height="14" fill="#ff00ff"/><rect x="22" y="82" width="1" height="88" fill="#ffffff"/><rect x="22" y="82" width="1" height="12" fill="#0000ff"/><rect x="22" y="94" width="1" height="7" fill="#ff00ff"/><rect x="23" y="84" width="1" height="86" fill="#ffffff"/><rect x="23" y="84" width="1" height="11" fill="#0000ff"/><rect x="23" y="95" width="1" height="5" fill="#ff00ff"/><rect x="24" y="83" width="1" height="87" fill="#ffffff"/><rect x="24" y="83" width="1" height="12" fill="#0000ff"/><rect x="24" y="95" width="1" height="3" fill="#ff00ff"/><rect x="25" y="83" width="1" height="87" fill="#ffffff"/><rect x="25" y="83" width="1" height="11" fill="#0000ff"/><rect x="25" y="94" width="1" height="5" fill="#ff00ff"/><rect x="26" y="83" width="1" height="87" fill="#ffffff"/><rect x="26" y="83" width="1" height="11" fill="#0000ff"/><rect x="26" y="94" width="1" height="9" fill="#ff00ff"/><rect x="27" y="82" width="1" height="88" fill="#ffffff"/><rect x="27" y="82" width="1" height="12" fill="#0000ff"/><rect x="27" y="94" width="1" height="9" fill="#ff00ff"/><rect x="28" y="84" width="1" height="86" fill="#ffffff"/><rect x="28" y="84" width="1" height="11" fill="#0000ff"/><rect x="28" y="95" width="1" height="6" fill="#ff00ff"/><rect x="29" y="83" width="1" height="87" fill="#ffffff"/><rect x="29" y="83" width="1" height="9" fill="#0000ff"/><rect x="29" y="92" width="1" height="10" fill="#ff00ff"/><rect x="30" y="84" width="1" height="86" fill="#ffffff"/><rect x="30" y="84" width="1" height="10" fill="#0000ff"/><rect x="30" y="94" width="1" height="26" fill="#ff00ff"/><rect x="31" y="84" width="1" height="86" fill="#ffffff"/><rect x="31" y="84" width="1" height="11" fill="#0000ff"/><rect x="31" y="95" width="1" height="9" fill="#ff00ff"/><rect x="32" y="84" width="1" height="86" fill="#ffffff"/><rect x="32" y="84" width="1" height="11" fill="#0000ff"/><rect x="32" y="95" width="1" height="5" fill="#ff00ff"/><rect x="33" y="84" width="1" height="86" fill="#ffffff"/><rect x="33" y="84" width="1" height="11" fill="#0000ff"/><rect x="33" y="95" width="1" height="10" fill="#ff00ff"/><rect x="34" y="84" width="1" height="86" fill="#ffffff"/><rect x="34" y="84" width="1" height="10" fill="#0000ff"/><rect x="34" y="94" width="1" height="8" fill="#ff00ff"/><rect x="35" y="83" width="1" height="87" fill="#ffffff"/><rect x="35" y="83" width="1" height="9" fill="#0000ff"/><rect x="35" y="92" width="1" height="18" fill="#ff00ff"/><rect x="36" y="83" width="1" height="87" fill="#ffffff"/><rect x="36" y="83" width="1" height="9" fill="#0000ff"/><rect x="36" y="92" width="1" height="8" fill="#ff00ff"/><rect x="37" y="85" width="1" height="85" fill="#ffffff"/><rect x="37" y="85" width="1" height="7" fill="#0000ff"/><rect x="37" y="92" width="1" height="7" fill="#ff00ff"/><rect x="38" y="85" width="1" height="85" fill="#ffffff"/><rect x="38" y="85" width="1" height="9" fill="#0000ff"/><rect x="38" y="94" width="1" height="9" fill="#ff00ff"/><rect x="39" y="84" width="1" height="86" fill="#ffffff"/><rect x="39" y="84" width="1" height="11" fill="#0000ff"/><rect x="39" y="95" width="1" height="6" fill="#ff00ff"/><rect x="40" y="83" width="1" height="87" fill="#ffffff"/><rect x="40" y="83" width="1" height="9" fill="#0000ff"/><rect x="40" y="92" width="1" height="7" fill="#ff00ff"/><rect x="41" y="82" width="1" height="88" fill="#ffffff"/><rect x="41" y="82" width="1" height="11" fill="#0000ff"/><rect x="41" y="93" width="1" height="9" fill="#ff00ff"/><rect x="42" y="81" width="1" height="89" fill="#ffffff"/><rect x="42" y="81" width="1" height="13" fill="#0000ff"/><rect x="42" y="94" width="1" height="9" fill="#ff00ff"/><rect x="43" y="81" width="1" height="89" fill="#ffffff"/><rect x="43" y="81" width="1" height="12" fill="#0000ff"/><rect x="43" y="93" width="1" height="7" fill="#ff00ff"/><rect x="44" y="80" width="1" height="90" fill="#ffffff"/><rect x="44" y="80" width="1" height="15" fill="#0000ff"/><rect x="44" y="95" width="1" height="4" fill="#ff00ff"/><rect x="45" y="81" width="1" height="89" fill="#ffffff"/><rect x="45" y="81" width="1" height="14" fill="#0000ff"/><rect x="45" y="95" width="1" height="6" fill="#ff00ff"/><rect x="46" y="80" width="1" height="90" fill="#ffffff"/><rect x="46" y="80" width="1" height="12" fill="#0000ff"/><rect x="46" y="92" width="1" height="9" fill="#ff00ff"/><rect x="47" y="80" width="1" height="90" fill="#ffffff"/><rect x="47" y="80" width="1" height="14" fill="#0000ff"/><rect x="47" y="94" width="1" height="4" fill="#ff00ff"/><rect x="48" y="79" width="1" height="91" fill="#ffffff"/><rect x="48" y="79" width="1" height="15" fill="#0000ff"/><rect x="48" y="94" width="1" height="6" fill="#ff00ff"/><rect x="49" y="79" width="1" height="91" fill="#ffffff"/><rect x="49" y="79" width="1" height="15" fill="#0000ff"/><rect x="49" y="94" width="1" height="6" fill="#ff00ff"/><rect x="50" y="79" width="1" height="91" fill="#ffffff"/><rect x="50" y="79" width="1" height="13" fill="#0000ff"/><rect x="50" y="92" width="1" height="9" fill="#ff00ff"/><rect x="51" y="77" width="1" height="93" fill="#ffffff"/><rect x="51" y="77" width="1" height="18" fill="#0000ff"/><rect x="51" y="95" width="1" height="14" fill="#ff00ff"/><rect x="52" y="78" width="1" height="92" fill="#ffffff"/><rect x="52" y="78" width="1" height="14" fill="#0000ff"/><rect x="52" y="92" width="1" height="8" fill="#ff00ff"/><rect x="53" y="80" width="1" height="90" fill="#ffffff"/><rect x="53" y="80" width="1" height="15" fill="#0000ff"/><rect x="53" y="95" width="1" height="10" fill="#ff00ff"/><rect x="54" y="79" width="1" height="91" fill="#ffffff"/><rect x="54" y="79" width="1" height="15" fill="#0000ff"/><rect x="54" y="94" width="1" height="17" fill="#ff00ff"/><rect x="55" y="80" width="1" height="90" fill="#ffffff"/><rect x="55" y="80" width="1" height="12" fill="#0000ff"/><rect x="55" y="92" width="1" height="14" fill="#ff00ff"/><rect x="56" y="79" width="1" height="91" fill="#ffffff"/><rect x="56" y="79" width="1" height="14" fill="#0000ff"/><rect x="56" y="93" width="1" height="7" fill="#ff00ff"/><rect x="57" y="78" width="1" height="92" fill="#ffffff"/><rect x="57" y="78" width="1" height="14" fill="#0000ff"/><rect x="57" y="92" width="1" height="16" fill="#ff00ff"/><rect x="58" y="79" width="1" height="91" fill="#ffffff"/><rect x="58" y="79" width="1" height="14" fill="#0000ff"/><rect x="58" y="93" width="1" height="6" fill="#ff00ff"/><rect x="59" y="80" width="1" height="90" fill="#ffffff"/><rect x="59" y="80" width="1" height="13" fill="#0000ff"/><rect x="59" y="93" width="1" height="7" fill="#ff00ff"/><rect x="60" y="78" width="1" height="92" fill="#ffffff"/><rect x="60" y="78" width="1" height="16" fill="#0000ff"/><rect x="60" y="94" width="1" height="11" fill="#ff00ff"/><rect x="61" y="78" width="1" height="92" fill="#ffffff"/><rect x="61" y="78" width="1" height="16" fill="#0000ff"/><rect x="61" y="94" width="1" height="6" fill="#ff00ff"/><rect x="62" y="78" width="1" height="92" fill="#ffffff"/><rect x="62" y="78" width="1" height="16" fill="#0000ff"/><rect x="62" y="94" width="1" height="16" fill="#ff00ff"/><rect x="63" y="79" width="1" height="91" fill="#ffffff"/><rect x="63" y="79" width="1" height="16" fill="#0000ff"/><rect x="63" y="95" width="1" height="13" fill="#ff00ff"/><rect x="64" y="79" width="1" height="91" fill="#ffffff"/><rect x="64" y="79" width="1" height="17" fill="#0000ff"/><rect x="64" y="96" width="1" height="3" fill="#ff00ff"/><rect x="65" y="77" width="1" height="93" fill="#ffffff"/><rect x="65" y="77" width="1" height="18" fill="#0000ff"/><rect x="65" y="95" width="1" height="10" fill="#ff00ff"/><rect x="66" y="77" width="1" height="93" fill="#ffffff"/><rect x="66" y="77" width="1" height="16" fill="#0000ff"/><rect x="66" y="93" width="1" height="5" fill="#ff00ff"/><rect x="67" y="77" width="1" height="93" fill="#ffffff"/><rect x="67" y="77" width="1" height="17" fill="#0000ff"/><rect x="67" y="94" width="1" height="13" fill="#ff00ff"/><rect x="68" y="76" width="1" height="94" fill="#ffffff"/><rect x="68" y="76" width="1" height="19" fill="#0000ff"/><rect x="68" y="95" width="1" height="9" fill="#ff00ff"/><rect x="69" y="78" width="1" height="92" fill="#ffffff"/><rect x="69" y="78" width="1" height="18" fill="#0000ff"/><rect x="69" y="96" width="1" height="13" fill="#ff00ff"/><rect x="70" y="76" width="1" height="94" fill="#ffffff"/><rect x="70" y="76" width="1" height="19" fill="#0000ff"/><rect x="70" y="95" width="1" height="5" fill="#ff00ff"/><rect x="71" y="77" width="1" height="93" fill="#ffffff"/><rect x="71" y="77" width="1" height="16" fill="#0000ff"/><rect x="71" y="93" width="1" height="8" fill="#ff00ff"/><rect x="72" y="76" width="1" height="94" fill="#ffffff"/><rect x="72" y="76" width="1" height="18" fill="#0000ff"/><rect x="72" y="94" width="1" height="6" fill="#ff00ff"/><rect x="73" y="75" width="1" height="95" fill="#ffffff"/><rect x="73" y="75" width="1" height="18" fill="#0000ff"/><rect x="73" y="93" width="1" height="13" fill="#ff00ff"/><rect x="74" y="77" width="1" height="93" fill="#ffffff"/><rect x="74" y="77" width="1" height="19" fill="#0000ff"/><rect x="74" y="96" width="1" height="10" fill="#ff00ff"/><rect x="75" y="74" width="1" height="96" fill="#ffffff"/><rect x="75" y="74" width="1" height="22" fill="#0000ff"/><rect x="75" y="96" width="1" height="4" fill="#ff00ff"/><rect x="76" y="75" width="1" height="95" fill="#ffffff"/><rect x="76" y="75" width="1" height="19" fill="#0000ff"/><rect x="76" y="94" width="1" height="6" fill="#ff00ff"/><rect x="77" y="77" width="1" height="93" fill="#ffffff"/><rect x="77" y="77" width="1" height="17" fill="#0000ff"/><rect x="77" y="94" width="1" height="14" fill="#ff00ff"/><rect x="78" y="82" width="1" height="88" fill="#ffffff"/><rect x="78" y="82" width="1" height="14" fill="#0000ff"/><rect x="78" y="96" width="1" height="2" fill="#ff00ff"/><rect x="79" y="81" width="1" height="89" fill="#ffffff"/><rect x="79" y="81" width="1" height="14" fill="#0000ff"/><rect x="79" y="95" width="1" height="8" fill="#ff00ff"/><rect x="80" y="80" width="1" height="90" fill="#ffffff"/><rect x="80" y="80" width="1" height="14" fill="#0000ff"/><rect x="80" y="94" width="1" height="3" fill="#ff00ff"/><rect x="81" y="81" width="1" height="89" fill="#ffffff"/><rect x="81" y="81" width="1" height="15" fill="#0000ff"/><rect x="81" y="96" width="1" height="5" fill="#ff00ff"/><rect x="82" y="81" width="1" height="89" fill="#ffffff"/><rect x="82" y="81" width="1" height="14" fill="#0000ff"/><rect x="82" y="95" width="1" height="4" fill="#ff00ff"/><rect x="83" y="79" width="1" height="91" fill="#ffffff"/><rect x="83" y="79" width="1" height="16" fill="#0000ff"/><rect x="83" y="95" width="1" height="8" fill="#ff00ff"/><rect x="84" y="80" width="1" height="90" fill="#ffffff"/><rect x="84" y="80" width="1" height="14" fill="#0000ff"/><rect x="84" y="94" width="1" height="8" fill="#ff00ff"/><rect x="85" y="79" width="1" height="91" fill="#ffffff"/><rect x="85" y="79" width="1" height="17" fill="#0000ff"/><rect x="85" y="96" width="1" height="6" fill="#ff00ff"/><rect x="86" y="79" width="1" height="91" fill="#ffffff"/><rect x="86" y="79" width="1" height="17" fill="#0000ff"/><rect x="86" y="96" width="1" height="6" fill="#ff00ff"/><rect x="87" y="80" width="1" height="90" fill="#ffffff"/><rect x="87" y="80" width="1" height="16" fill="#0000ff"/><rect x="87" y="96" width="1" height="5" fill="#ff00ff"/><rect x="88" y="80" width="1" height="90" fill="#ffffff"/><rect x="88" y="80" width="1" height="16" fill="#0000ff"/><rect x="88" y="96" width="1" height="7" fill="#ff00ff"/><rect x="89" y="79" width="1" height="91" fill="#ffffff"/><rect x="89" y="79" width="1" height="14" fill="#0000ff"/><rect x="89" y="93" width="1" height="6" fill="#ff00ff"/><rect x="90" y="81" width="1" height="89" fill="#ffffff"/><rect x="90" y="81" width="1" height="14" fill="#0000ff"/><rect x="90" y="95" width="1" height="3" fill="#ff00ff"/><rect x="91" y="79" width="1" height="91" fill="#ffffff"/><rect x="91" y="79" width="1" height="16" fill="#0000ff"/><rect x="91" y="95" width="1" height="4" fill="#ff00ff"/><rect x="92" y="79" width="1" height="91" fill="#ffffff"/><rect x="92" y="79" width="1" height="16" fill="#0000ff"/><rect x="92" y="95" width="1" height="5" fill="#ff00ff"/><rect x="93" y="81" width="1" height="89" fill="#ffffff"/><rect x="93" y="81" width="1" height="16" fill="#0000ff"/><rect x="93" y="97" width="1" height="3" fill="#ff00ff"/><rect x="94" y="83" width="1" height="87" fill="#ffffff"/><rect x="94" y="83" width="1" height="13" fill="#0000ff"/><rect x="94" y="96" width="1" height="13" fill="#ff00ff"/><rect x="95" y="86" width="1" height="84" fill="#ffffff"/><rect x="95" y="86" width="1" height="10" fill="#0000ff"/><rect x="95" y="96" width="1" height="2" fill="#ff00ff"/><rect x="96" y="89" width="1" height="81" fill="#ffffff"/><rect x="96" y="89" width="1" height="4" fill="#0000ff"/><rect x="96" y="93" width="1" height="5" fill="#ff00ff"/><rect x="97" y="89" width="1" height="81" fill="#ffffff"/><rect x="97" y="89" width="1" height="4" fill="#0000ff"/><rect x="97" y="93" width="1" height="5" fill="#ff00ff"/><rect x="98" y="89" width="1" height="81" fill="#ffffff"/><rect x="98" y="89" width="1" height="6" fill="#0000ff"/><rect x="98" y="95" width="1" height="4" fill="#ff00ff"/><rect x="99" y="87" width="1" height="83" fill="#ffffff"/><rect x="99" y="87" width="1" height="8" fill="#0000ff"/><rect x="99" y="95" width="1" height="7" fill="#ff00ff"/><rect x="100" y="87" width="1" height="83" fill="#ffffff"/><rect x="100" y="87" width="1" height="9" fill="#0000ff"/><rect x="100" y="96" width="1" height="1" fill="#ff00ff"/><rect x="101" y="86" width="1" height="84" fill="#ffffff"/><rect x="101" y="86" width="1" height="10" fill="#0000ff"/><rect x="101" y="96" width="1" height="1" fill="#ff00ff"/><rect x="102" y="85" width="1" height="85" fill="#ffffff"/><rect x="102" y="85" width="1" height="9" fill="#0000ff"/><rect x="102" y="94" width="1" height="11" fill="#ff00ff"/><rect x="103" y="86" width="1" height="84" fill="#ffffff"/><rect x="103" y="86" width="1" height="10" fill="#0000ff"/><rect x="103" y="96" width="1" height="1" fill="#ff00ff"/><rect x="104" y="85" width="1" height="85" fill="#ffffff"/><rect x="104" y="85" width="1" height="10" fill="#0000ff"/><rect x="104" y="95" width="1" height="4" fill="#ff00ff"/><rect x="105" y="86" width="1" height="84" fill="#ffffff"/><rect x="105" y="86" width="1" height="9" fill="#0000ff"/><rect x="105" y="95" width="1" height="3" fill="#ff00ff"/><rect x="106" y="88" width="1" height="82" fill="#ffffff"/><rect x="106" y="88" width="1" height="8" fill="#0000ff"/><rect x="106" y="96" width="1" height="2" fill="#ff00ff"/><rect x="107" y="87" width="1" height="83" fill="#ffffff"/><rect x="107" y="87" width="1" height="8" fill="#0000ff"/><rect x="107" y="95" width="1" height="4" fill="#ff00ff"/><rect x="108" y="88" width="1" height="82" fill="#ffffff"/><rect x="108" y="88" width="1" height="6" fill="#0000ff"/><rect x="108" y="94" width="1" height="7" fill="#ff00ff"/><rect x="109" y="90" width="1" height="80" fill="#ffffff"/><rect x="109" y="90" width="1" height="7" fill="#0000ff"/><rect x="109" y="97" width="1" height="12" fill="#ff00ff"/><rect x="110" y="91" width="1" height="79" fill="#ffffff"/><rect x="110" y="91" width="1" height="6" fill="#0000ff"/><rect x="111" y="92" width="1" height="78" fill="#ffffff"/><rect x="111" y="92" width="1" height="5" fill="#ff0000"/><rect x="111" y="97" width="1" height="40" fill="#ffff00"/><rect x="112" y="92" width="1" height="78" fill="#ffffff"/><rect x="112" y="92" width="1" height="4" fill="#ff0000"/><rect x="112" y="96" width="1" height="41" fill="#ffff00"/><rect x="113" y="94" width="1" height="76" fill="#ffffff"/><rect x="113" y="94" width="1" height="5" fill="#ff0000"/><rect x="113" y="99" width="1" height="36" fill="#ffff00"/><rect x="114" y="95" width="1" height="75" fill="#ffffff"/><rect x="114" y="95" width="1" height="5" fill="#ff0000"/><rect x="114" y="100" width="1" height="45" fill="#ffff00"/><rect x="115" y="93" width="1" height="77" fill="#ffffff"/><rect x="115" y="93" width="1" height="4" fill="#ff0000"/><rect x="115" y="97" width="1" height="41" fill="#ffff00"/><rect x="116" y="95" width="1" height="75" fill="#ffffff"/><rect x="116" y="95" width="1" height="4" fill="#ff0000"/><rect x="116" y="99" width="1" height="33" fill="#ffff00"/><rect x="117" y="95" width="1" height="75" fill="#ffffff"/><rect x="117" y="95" width="1" height="5" fill="#ff0000"/><rect x="117" y="100" width="1" height="27" fill="#ffff00"/><rect x="118" y="95" width="1" height="75" fill="#ffffff"/><rect x="118" y="95" width="1" height="4" fill="#ff0000"/><rect x="118" y="99" width="1" height="31" fill="#ffff00"/><rect x="119" y="94" width="1" height="76" fill="#ffffff"/><rect x="119" y="94" width="1" height="6" fill="#ff0000"/><rect x="119" y="100" width="1" height="29" fill="#ffff00"/><rect x="120" y="93" width="1" height="77" fill="#ffffff"/><rect x="120" y="93" width="1" height="4" fill="#ff0000"/><rect x="120" y="97" width="1" height="19" fill="#ffff00"/><rect x="121" y="93" width="1" height="77" fill="#ffffff"/><rect x="121" y="93" width="1" height="6" fill="#ff0000"/><rect x="121" y="99" width="1" height="19" fill="#ffff00"/><rect x="122" y="96" width="1" height="74" fill="#ffffff"/><rect x="122" y="96" width="1" height="4" fill="#ff0000"/><rect x="122" y="100" width="1" height="18" fill="#ffff00"/><rect x="123" y="94" width="1" height="76" fill="#ffffff"/><rect x="123" y="94" width="1" height="5" fill="#ff0000"/><rect x="123" y="99" width="1" height="18" fill="#ffff00"/><rect x="124" y="96" width="1" height="74" fill="#ffffff"/><rect x="124" y="96" width="1" height="4" fill="#ff0000"/><rect x="124" y="100" width="1" height="12" fill="#ffff00"/><rect x="125" y="95" width="1" height="75" fill="#ffffff"/><rect x="125" y="95" width="1" height="6" fill="#ff0000"/><rect x="125" y="101" width="1" height="21" fill="#ffff00"/><rect x="126" y="97" width="1" height="73" fill="#ffffff"/><rect x="126" y="97" width="1" height="3" fill="#ff0000"/><rect x="126" y="100" width="1" height="15" fill="#ffff00"/><rect x="127" y="96" width="1" height="74" fill="#ffffff"/><rect x="127" y="96" width="1" height="3" fill="#ff0000"/><rect x="127" y="99" width="1" height="22" fill="#ffff00"/><rect x="128" y="95" width="1" height="75" fill="#ffffff"/><rect x="128" y="95" width="1" height="5" fill="#ff0000"/><rect x="128" y="100" width="1" height="19" fill="#ffff00"/><rect x="129" y="95" width="1" height="75" fill="#ffffff"/><rect x="129" y="95" width="1" height="4" fill="#ff0000"/><rect x="129" y="99" width="1" height="20" fill="#ffff00"/><rect x="130" y="97" width="1" height="73" fill="#ffffff"/><rect x="130" y="97" width="1" height="4" fill="#ff0000"/><rect x="130" y="101" width="1" height="23" fill="#ffff00"/><rect x="131" y="95" width="1" height="75" fill="#ffffff"/><rect x="131" y="95" width="1" height="3" fill="#ff0000"/><rect x="131" y="98" width="1" height="19" fill="#ffff00"/><rect x="132" y="96" width="1" height="74" fill="#ffffff"/><rect x="132" y="96" width="1" height="5" fill="#ff0000"/><rect x="132" y="101" width="1" height="24" fill="#ffff00"/><rect x="133" y="97" width="1" height="73" fill="#ffffff"/><rect x="133" y="97" width="1" height="4" fill="#ff0000"/><rect x="133" y="101" width="1" height="18" fill="#ffff00"/><rect x="134" y="98" width="1" height="72" fill="#ffffff"/><rect x="134" y="98" width="1" height="4" fill="#ff0000"/><rect x="134" y="102" width="1" height="22" fill="#ffff00"/><rect x="135" y="98" width="1" height="72" fill="#ffffff"/><rect x="135" y="98" width="1" height="4" fill="#ff0000"/><rect x="135" y="102" width="1" height="21" fill="#ffff00"/><rect x="136" y="97" width="1" height="73" fill="#ffffff"/><rect x="136" y="97" width="1" height="5" fill="#ff0000"/><rect x="136" y="102" width="1" height="20" fill="#ffff00"/><rect x="137" y="99" width="1" height="71" fill="#ffffff"/><rect x="137" y="99" width="1" height="3" fill="#ff0000"/><rect x="137" y="102" width="1" height="30" fill="#ffff00"/><rect x="138" y="97" width="1" height="73" fill="#ffffff"/><rect x="138" y="97" width="1" height="5" fill="#ff0000"/><rect x="138" y="102" width="1" height="22" fill="#ffff00"/><rect x="139" y="98" width="1" height="72" fill="#ffffff"/><rect x="139" y="98" width="1" height="3" fill="#00ff00"/><rect x="139" y="101" width="1" height="32" fill="#ffff00"/><rect x="140" y="99" width="1" height="71" fill="#ffffff"/><rect x="140" y="99" width="1" height="5" fill="#00ff00"/><rect x="140" y="104" width="1" height="16" fill="#ffff00"/><rect x="141" y="100" width="1" height="70" fill="#ffffff"/><rect x="141" y="100" width="1" height="5" fill="#00ff00"/><rect x="141" y="105" width="1" height="22" fill="#ffff00"/><rect x="142" y="98" width="1" height="72" fill="#ffffff"/><rect x="142" y="98" width="1" height="3" fill="#00ff00"/><rect x="142" y="101" width="1" height="23" fill="#ffff00"/><rect x="143" y="99" width="1" height="71" fill="#ffffff"/><rect x="143" y="99" width="1" height="4" fill="#00ff00"/><rect x="143" y="103" width="1" height="18" fill="#ffff00"/><rect x="144" y="99" width="1" height="71" fill="#ffffff"/><rect x="144" y="99" width="1" height="6" fill="#00ff00"/><rect x="144" y="105" width="1" height="26" fill="#ffff00"/><rect x="145" y="100" width="1" height="70" fill="#ffffff"/><rect x="145" y="100" width="1" height="7" fill="#00ff00"/><rect x="145" y="107" width="1" height="19" fill="#ffff00"/><rect x="146" y="98" width="1" height="72" fill="#ffffff"/><rect x="146" y="98" width="1" height="5" fill="#00ff00"/><rect x="146" y="103" width="1" height="22" fill="#ffff00"/><rect x="147" y="99" width="1" height="71" fill="#ffffff"/><rect x="147" y="99" width="1" height="9" fill="#00ff00"/><rect x="147" y="108" width="1" height="24" fill="#ffff00"/><rect x="148" y="101" width="1" height="69" fill="#ffffff"/><rect x="148" y="101" width="1" height="3" fill="#00ff00"/><rect x="148" y="104" width="1" height="22" fill="#ffff00"/><rect x="149" y="101" width="1" height="69" fill="#ffffff"/><rect x="149" y="101" width="1" height="4" fill="#00ff00"/><rect x="149" y="105" width="1" height="30" fill="#ffff00"/><rect x="150" y="100" width="1" height="70" fill="#ffffff"/><rect x="150" y="100" width="1" height="8" fill="#00ff00"/><rect x="150" y="108" width="1" height="21" fill="#ffff00"/><rect x="151" y="100" width="1" height="70" fill="#ffffff"/><rect x="151" y="100" width="1" height="6" fill="#00ff00"/><rect x="151" y="106" width="1" height="19" fill="#ffff00"/><rect x="152" y="99" width="1" height="71" fill="#ffffff"/><rect x="152" y="99" width="1" height="10" fill="#00ff00"/><rect x="152" y="109" width="1" height="25" fill="#ffff00"/><rect x="153" y="98" width="1" height="72" fill="#ffffff"/><rect x="153" y="98" width="1" height="9" fill="#00ff00"/><rect x="153" y="107" width="1" height="23" fill="#ffff00"/><rect x="154" y="98" width="1" height="72" fill="#ffffff"/><rect x="154" y="98" width="1" height="10" fill="#00ff00"/><rect x="154" y="108" width="1" height="33" fill="#ffff00"/><rect x="155" y="97" width="1" height="73" fill="#ffffff"/><rect x="155" y="97" width="1" height="12" fill="#00ff00"/><rect x="155" y="109" width="1" height="26" fill="#ffff00"/><rect x="156" y="100" width="1" height="70" fill="#ffffff"/><rect x="156" y="100" width="1" height="10" fill="#00ff00"/><rect x="156" y="110" width="1" height="15" fill="#ffff00"/><rect x="157" y="99" width="1" height="71" fill="#ffffff"/><rect x="157" y="99" width="1" height="6" fill="#00ff00"/><rect x="157" y="105" width="1" height="29" fill="#ffff00"/><rect x="158" y="100" width="1" height="70" fill="#ffffff"/><rect x="158" y="100" width="1" height="6" fill="#00ff00"/><rect x="158" y="106" width="1" height="22" fill="#ffff00"/><rect x="159" y="97" width="1" height="73" fill="#ffffff"/><rect x="159" y="97" width="1" height="11" fill="#00ff00"/><rect x="159" y="108" width="1" height="27" fill="#ffff00"/><rect x="160" y="99" width="1" height="71" fill="#ffffff"/><rect x="160" y="99" width="1" height="8" fill="#00ff00"/><rect x="160" y="107" width="1" height="31" fill="#ffff00"/><rect x="161" y="99" width="1" height="71" fill="#ffffff"/><rect x="161" y="99" width="1" height="9" fill="#00ff00"/><rect x="161" y="108" width="1" height="25" fill="#ffff00"/><rect x="162" y="99" width="1" height="71" fill="#ffffff"/><rect x="162" y="99" width="1" height="11" fill="#00ff00"/><rect x="162" y="110" width="1" height="28" fill="#ffff00"/><rect x="163" y="98" width="1" height="72" fill="#ffffff"/><rect x="163" y="98" width="1" height="13" fill="#00ff00"/><rect x="163" y="111" width="1" height="24" fill="#ffff00"/><rect x="164" y="100" width="1" height="70" fill="#ffffff"/><rect x="164" y="100" width="1" height="11" fill="#00ff00"/><rect x="164" y="111" width="1" height="26" fill="#ffff00"/><rect x="165" y="97" width="1" height="73" fill="#ffffff"/><rect x="165" y="97" width="1" height="16" fill="#00ff00"/><rect x="165" y="113" width="1" height="21" fill="#ffff00"/><rect x="166" y="98" width="1" height="72" fill="#ffffff"/><rect x="166" y="98" width="1" height="13" fill="#00ff00"/><rect x="166" y="111" width="1" height="25" fill="#ffff00"/><rect x="167" y="99" width="1" height="71" fill="#ffffff"/><rect x="167" y="99" width="1" height="10" fill="#00ff00"/><rect x="167" y="109" width="1" height="19" fill="#ffff00"/><rect x="168" y="99" width="1" height="71" fill="#ffffff"/><rect x="168" y="99" width="1" height="15" fill="#00ff00"/><rect x="168" y="114" width="1" height="22" fill="#ffff00"/><rect x="169" y="99" width="1" height="71" fill="#ffffff"/><rect x="169" y="99" width="1" height="11" fill="#00ff00"/><rect x="169" y="110" width="1" height="20" fill="#ffff00"/><rect x="170" y="99" width="1" height="71" fill="#ffffff"/><rect x="170" y="99" width="1" height="9" fill="#00ff00"/><rect x="170" y="108" width="1" height="31" fill="#ffff00"/><rect x="171" y="99" width="1" height="71" fill="#ffffff"/><rect x="171" y="99" width="1" height="14" fill="#00ff00"/><rect x="171" y="113" width="1" height="22" fill="#ffff00"/><rect x="172" y="99" width="1" height="71" fill="#ffffff"/><rect x="172" y="99" width="1" height="13" fill="#00ff00"/><rect x="172" y="112" width="1" height="29" fill="#ffff00"/><rect x="173" y="97" width="1" height="73" fill="#ffffff"/><rect x="173" y="97" width="1" height="12" fill="#00ff00"/><rect x="173" y="109" width="1" height="20" fill="#ffff00"/><rect x="174" y="98" width="1" height="72" fill="#ffffff"/><rect x="174" y="98" width="1" height="15" fill="#00ff00"/><rect x="174" y="113" width="1" height="20" fill="#ffff00"/><rect x="175" y="99" width="1" height="71" fill="#ffffff"/><rect x="175" y="99" width="1" height="10" fill="#00ff00"/><rect x="175" y="109" width="1" height="30" fill="#ffff00"/><rect x="176" y="99" width="1" height="71" fill="#ffffff"/><rect x="176" y="99" width="1" height="11" fill="#00ff00"/><rect x="176" y="110" width="1" height="22" fill="#ffff00"/><rect x="177" y="97" width="1" height="73" fill="#ffffff"/><rect x="177" y="97" width="1" height="14" fill="#00ff00"/><rect x="177" y="111" width="1" height="18" fill="#ffff00"/><rect x="178" y="98" width="1" height="72" fill="#ffffff"/><rect x="178" y="98" width="1" height="16" fill="#00ff00"/><rect x="178" y="114" width="1" height="16" fill="#ffff00"/><rect x="179" y="98" width="1" height="72" fill="#ffffff"/><rect x="179" y="98" width="1" height="16" fill="#00ff00"/><rect x="179" y="114" width="1" height="17" fill="#ffff00"/><rect x="180" y="97" width="1" height="73" fill="#ffffff"/><rect x="180" y="97" width="1" height="11" fill="#00ff00"/><rect x="180" y="108" width="1" height="29" fill="#ffff00"/><rect x="181" y="98" width="1" height="72" fill="#ffffff"/><rect x="181" y="98" width="1" height="12" fill="#00ff00"/><rect x="181" y="110" width="1" height="22" fill="#ffff00"/><rect x="182" y="97" width="1" height="73" fill="#ffffff"/><rect x="182" y="97" width="1" height="12" fill="#00ff00"/><rect x="182" y="109" width="1" height="28" fill="#ffff00"/><rect x="183" y="97" width="1" height="73" fill="#ffffff"/><rect x="183" y="97" width="1" height="12" fill="#00ff00"/><rect x="183" y="109" width="1" height="16" fill="#ffff00"/><rect x="184" y="97" width="1" height="73" fill="#ffffff"/><rect x="184" y="97" width="1" height="13" fill="#00ff00"/><rect x="184" y="110" width="1" height="24" fill="#ffff00"/><rect x="185" y="96" width="1" height="74" fill="#ffffff"/><rect x="185" y="96" width="1" height="15" fill="#00ff00"/><rect x="185" y="111" width="1" height="21" fill="#ffff00"/><rect x="186" y="97" width="1" height="73" fill="#ffffff"/><rect x="186" y="97" width="1" height="12" fill="#00ff00"/><rect x="186" y="109" width="1" height="25" fill="#ffff00"/><rect x="187" y="98" width="1" height="72" fill="#ffffff"/><rect x="187" y="98" width="1" height="13" fill="#00ff00"/><rect x="187" y="111" width="1" height="24" fill="#ffff00"/><rect x="188" y="98" width="1" height="72" fill="#ffffff"/><rect x="188" y="98" width="1" height="12" fill="#00ff00"/><rect x="188" y="110" width="1" height="18" fill="#ffff00"/><rect x="189" y="97" width="1" height="73" fill="#ffffff"/><rect x="189" y="97" width="1" height="9" fill="#00ff00"/><rect x="189" y="106" width="1" height="34" fill="#ffff00"/><rect x="190" y="96" width="1" height="74" fill="#ffffff"/><rect x="190" y="96" width="1" height="16" fill="#00ff00"/><rect x="190" y="112" width="1" height="23" fill="#ffff00"/><rect x="191" y="97" width="1" height="73" fill="#ffffff"/><rect x="191" y="97" width="1" height="14" fill="#00ff00"/><rect x="191" y="111" width="1" height="24" fill="#ffff00"/><rect x="192" y="97" width="1" height="73" fill="#ffffff"/><rect x="192" y="97" width="1" height="12" fill="#00ff00"/><rect x="192" y="109" width="1" height="37" fill="#ffff00"/><rect x="193" y="96" width="1" height="74" fill="#ffffff"/><rect x="193" y="96" width="1" height="16" fill="#00ff00"/><rect x="193" y="112" width="1" height="26" fill="#ffff00"/><rect x="194" y="97" width="1" height="73" fill="#ffffff"/><rect x="194" y="97" width="1" height="11" fill="#00ff00"/><rect x="194" y="108" width="1" height="48" fill="#ffff00"/><rect x="195" y="95" width="1" height="75" fill="#ffffff"/><rect x="195" y="95" width="1" height="11" fill="#00ff00"/><rect x="195" y="106" width="1" height="35" fill="#ffff00"/><rect x="196" y="97" width="1" height="73" fill="#ffffff"/><rect x="196" y="97" width="1" height="7" fill="#00ff00"/><rect x="196" y="104" width="1" height="40" fill="#ffff00"/><rect x="197" y="95" width="1" height="75" fill="#ffffff"/><rect x="197" y="95" width="1" height="10" fill="#00ff00"/><rect x="197" y="105" width="1" height="30" fill="#ffff00"/><rect x="198" y="96" width="1" height="74" fill="#ffffff"/><rect x="198" y="96" width="1" height="9" fill="#00ff00"/><rect x="198" y="105" width="1" height="38" fill="#ffff00"/><rect x="199" y="96" width="1" height="74" fill="#ffffff"/><rect x="199" y="96" width="1" height="9" fill="#00ff00"/><rect x="199" y="105" width="1" height="31" fill="#ffff00"/><rect x="200" y="95" width="1" height="75" fill="#ffffff"/><rect x="200" y="95" width="1" height="8" fill="#00ff00"/><rect x="200" y="103" width="1" height="43" fill="#ffff00"/><rect x="201" y="96" width="1" height="74" fill="#ffffff"/><rect x="201" y="96" width="1" height="7" fill="#00ff00"/><rect x="201" y="103" width="1" height="32" fill="#ffff00"/><rect x="2" y="93" width="1" height="77" fill="#8080ff"/><rect x="5" y="93" width="1" height="77" fill="#00ffff"/><rect x="201" y="25" width="1" height="6" fill="#20c020"/><rect x="201" y="31" width="1" height="29" fill="#c0c020"/><path d="M0.5,170 V0.5 H201.5 V170" fill="none" stroke="#303030" stroke-width="1"/><rect x="0" y="168" width="203" height="1.6" fill="#9a9a9a"/></svg>
<svg class="ab" style="left:473px;top:227px" width="10" height="10"><path d="M0.5,9 L4.5,0.5 L8.5,9 Z" fill="#000"/></svg>
<svg class="ab" style="left:674px;top:227px" width="11" height="10"><path d="M1,9 L5,0.8 L9.5,9 Z" fill="#fff" stroke="#606060" stroke-width="0.9"/></svg>
<div class="ab" style="left:479px;top:240px;width:51px;height:11px;border:1px solid #e2e2e2;background:#fff"></div>
<div class="t" style="left:481px;top:243.5px;font-size:6.8px;color:#202040">0.000000</div>
<div class="ab" style="left:520px;top:241px;width:9px;height:9px;border:1px solid #d0d0d0;background:linear-gradient(#f4f4f4,#e0e0e0)"></div>
<div class="ab" style="left:522.5px;top:242.5px;width:0;height:0;border-left:2px solid transparent;border-right:2px solid transparent;border-bottom:2px solid #7090b0"></div>
<div class="ab" style="left:522.5px;top:246.5px;width:0;height:0;border-left:2px solid transparent;border-right:2px solid transparent;border-top:2px solid #7090b0"></div>
<div class="ab" style="left:627px;top:240px;width:50px;height:11px;border:1px solid #e2e2e2;background:#fff"></div>
<div class="t" style="left:629px;top:243.5px;font-size:6.8px;color:#202040">1.000000</div>
<div class="ab" style="left:667px;top:241px;width:9px;height:9px;border:1px solid #d0d0d0;background:linear-gradient(#f4f4f4,#e0e0e0)"></div>
<div class="ab" style="left:669.5px;top:242.5px;width:0;height:0;border-left:2px solid transparent;border-right:2px solid transparent;border-bottom:2px solid #7090b0"></div>
<div class="ab" style="left:669.5px;top:246.5px;width:0;height:0;border-left:2px solid transparent;border-right:2px solid transparent;border-top:2px solid #7090b0"></div>
<div class="t" style="left:531.5px;top:243.5px;font-size:6.8px;color:#303050">Min</div>
<div class="t" style="left:611px;top:243.5px;font-size:6.8px;color:#303050">Max</div>
<div class="btn" style="left:553px;top:239px;width:13px;height:13px;border-color:#3c7fb1"></div>
<svg class="ab" style="left:556px;top:241px" width="7" height="9"><path d="M3.5,0.5 V8.5 M1.5,2.5 L3.5,0.5 L5.5,2.5 M1.5,6.5 L3.5,8.5 L5.5,6.5" stroke="#101010" fill="none" stroke-width="1"/></svg>
<div class="btn" style="left:570px;top:239px;width:13px;height:13px;border-color:#3c7fb1"></div>
<div class="ab" style="left:572.5px;top:241.5px;width:8px;height:8px;background:linear-gradient(#fff59a 0 33%,#f4a0a0 33% 66%,#a8b8f0 66%)"></div>
<div class="ab" style="left:587px;top:239px;width:14px;height:13px;border:1px solid #9a9a9a;border-radius:2px;background:linear-gradient(#fafafa,#dcdcdc)"></div>
<svg class="ab" style="left:589px;top:242px" width="10" height="7"><path d="M1,3.5 H9 M3,1.5 L1,3.5 L3,5.5 M7,1.5 L9,3.5 L7,5.5" stroke="#202020" fill="none" stroke-width="1"/></svg>
<div class="ab" style="left:6px;top:296px;width:688px;height:10px;background:#e0e0e0"></div>
<div class="ab" style="left:9px;top:297px;width:8px;height:7px;border:1px solid #8a9ab8;border-radius:1px;background:linear-gradient(#f8f8ff,#c8d0e8)"></div>
<div class="ab" style="left:11px;top:300px;width:4px;height:1px;background:#4a5a80"></div>
<div class="t b" style="left:24px;top:297.5px;font-size:7.4px;color:#202020">Revision Information</div>
<div class="ab" style="left:13px;top:311px;width:196px;height:10px;background:#e0e0e0"></div>
<div class="t b" style="left:16.5px;top:312.5px;font-size:7.4px;color:#202020">Resource Info</div>
<div class="ab" style="left:0;top:0;width:200px;height:409px;overflow:hidden">
<div class="t b" style="left:20.8px;top:326.2px;font-size:7.2px;color:#202020">Type:</div>
<div class="t" style="left:84px;top:327px;font-size:6.6px;color:#202020">Texture</div>
<div class="t b" style="left:20.8px;top:336.2px;font-size:7.2px;color:#202020">Name:</div>
<div class="t" style="left:84px;top:337px;font-size:6.6px;color:#202020">0x04b75f50</div>
<div class="t b" style="left:20.8px;top:346.2px;font-size:7.2px;color:#202020">Revision:</div>
<div class="t" style="left:84px;top:347px;font-size:6.6px;color:#202020">2</div>
<div class="t b" style="left:20.8px;top:356.2px;font-size:7.2px;color:#202020">Memory Pool:</div>
<div class="t" style="left:84px;top:357px;font-size:6.6px;color:#0000e0;text-decoration:underline">0x059475a0 + 0</div>
<svg class="ab" style="left:135px;top:357px" width="5" height="5"><path d="M0.5,4.5 L4.5,0.5 M2,0.5 H4.5 V3" stroke="#3050c0" fill="none" stroke-width="1"/></svg>
<div class="t b" style="left:20.8px;top:366.2px;font-size:7.2px;color:#202020">Size:</div>
<div class="t" style="left:84px;top:367px;font-size:6.6px;color:#202020">8.00 MB</div>
<div class="t b" style="left:20.8px;top:376.2px;font-size:7.2px;color:#202020">Dimension:</div>
<div class="t" style="left:84px;top:377px;font-size:6.6px;color:#202020">1024 x 1024 x 0</div>
<div class="t b" style="left:20.8px;top:386.2px;font-size:7.2px;color:#202020">Image Type:</div>
<div class="t" style="left:84px;top:387px;font-size:6.6px;color:#202020">2D</div>
<div class="t b" style="left:20.8px;top:396.2px;font-size:7.2px;color:#202020">Format:</div>
<div class="t" style="left:84px;top:397px;font-size:6.6px;color:#202020">R16G16B16A16_SFLOAT</div>
<div class="t b" style="left:20.8px;top:406.2px;font-size:7.2px;color:#202020">Array Layers:</div>
<div class="t" style="left:84px;top:407px;font-size:6.6px;color:#202020">1</div>
</div>
<div class="ab" style="left:200px;top:323px;width:10px;height:86px;background:#ececec"></div>
<div class="ab" style="left:203px;top:329px;width:0;height:0;border-left:2.5px solid transparent;border-right:2.5px solid transparent;border-bottom:2.5px solid #404040"></div>
<div class="ab" style="left:200px;top:336px;width:10px;height:46px;border:1px solid #c0c0c0;border-radius:1px;background:linear-gradient(90deg,#f4f4f4,#e6e6e6 50%,#d4d4d4)"></div>
<div class="ab" style="left:203.5px;top:357px;width:3px;height:4px;border-top:1px solid #888;border-bottom:1px solid #888"></div>
<div class="ab" style="left:203px;top:403px;width:0;height:0;border-left:2.5px solid transparent;border-right:2.5px solid transparent;border-top:2.5px solid #404040"></div>
<div class="ab" style="left:211.4px;top:350.0px;width:2px;height:2px;border-radius:50%;background:#a4a4a4"></div>
<div class="ab" style="left:211.4px;top:353.85px;width:2px;height:2px;border-radius:50%;background:#a4a4a4"></div>
<div class="ab" style="left:211.4px;top:357.7px;width:2px;height:2px;border-radius:50%;background:#a4a4a4"></div>
<div class="ab" style="left:211.4px;top:361.55px;width:2px;height:2px;border-radius:50%;background:#a4a4a4"></div>
<div class="ab" style="left:211.4px;top:365.4px;width:2px;height:2px;border-radius:50%;background:#a4a4a4"></div>
<div class="ab" style="left:211.4px;top:369.25px;width:2px;height:2px;border-radius:50%;background:#a4a4a4"></div>
<div class="ab" style="left:304.9px;top:154.0px;width:2px;height:2px;border-radius:50%;background:#a4a4a4"></div>
<div class="ab" style="left:304.9px;top:157.85px;width:2px;height:2px;border-radius:50%;background:#a4a4a4"></div>
<div class="ab" style="left:304.9px;top:161.7px;width:2px;height:2px;border-radius:50%;background:#a4a4a4"></div>
<div class="ab" style="left:304.9px;top:165.55px;width:2px;height:2px;border-radius:50%;background:#a4a4a4"></div>
<div class="ab" style="left:304.9px;top:169.4px;width:2px;height:2px;border-radius:50%;background:#a4a4a4"></div>
<div class="ab" style="left:304.9px;top:173.25px;width:2px;height:2px;border-radius:50%;background:#a4a4a4"></div>
<div class="ab" style="left:457.5px;top:145.5px;width:2px;height:2px;border-radius:50%;background:#a4a4a4"></div>
<div class="ab" style="left:457.5px;top:149.35px;width:2px;height:2px;border-radius:50%;background:#a4a4a4"></div>
<div class="ab" style="left:457.5px;top:153.2px;width:2px;height:2px;border-radius:50%;background:#a4a4a4"></div>
<div class="ab" style="left:457.5px;top:157.05px;width:2px;height:2px;border-radius:50%;background:#a4a4a4"></div>
<div class="ab" style="left:457.5px;top:160.9px;width:2px;height:2px;border-radius:50%;background:#a4a4a4"></div>
<div class="ab" style="left:457.5px;top:164.75px;width:2px;height:2px;border-radius:50%;background:#a4a4a4"></div>
<div class="ab" style="left:215px;top:311px;width:479px;height:10px;background:#e0e0e0"></div>
<div class="t b" style="left:218px;top:312.5px;font-size:7.4px;color:#202020">Available Revisions (3)</div>
<div class="ab" style="left:215px;top:324px;width:480px;height:86px;border:1px solid #c2c2ca;border-radius:1px"></div>
<div class="ab" style="left:316px;top:327px;width:49px;height:70px;border:1px solid #202020;border-radius:3px;background:#d6d6fb"></div>
<svg class="ab" style="left:221px;top:331px;background:#000" width="41" height="40"><use href="#kRain" width="41" height="40"/></svg>
<div class="t" style="left:216px;top:376.5px;width:51px;text-align:center;font-size:6.6px;line-height:7.8px;color:#202020">Rev: 0<br>Evt: 0</div>
<div class="ab" style="left:270.5px;top:331px;width:41px;height:40px;background:#000"></div>
<div class="t" style="left:265.5px;top:376.5px;width:51px;text-align:center;font-size:6.6px;line-height:7.8px;color:#202020">Rev: 1<br>Evt: 12</div>
<svg class="ab" style="left:320px;top:331px;background:#000" width="41" height="40"><use href="#kRain" width="41" height="40"/></svg>
<div class="t" style="left:315px;top:376.5px;width:51px;text-align:center;font-size:6.6px;line-height:7.8px;color:#202020">Rev: 2<br>Evt: 19</div>
</body></html>
